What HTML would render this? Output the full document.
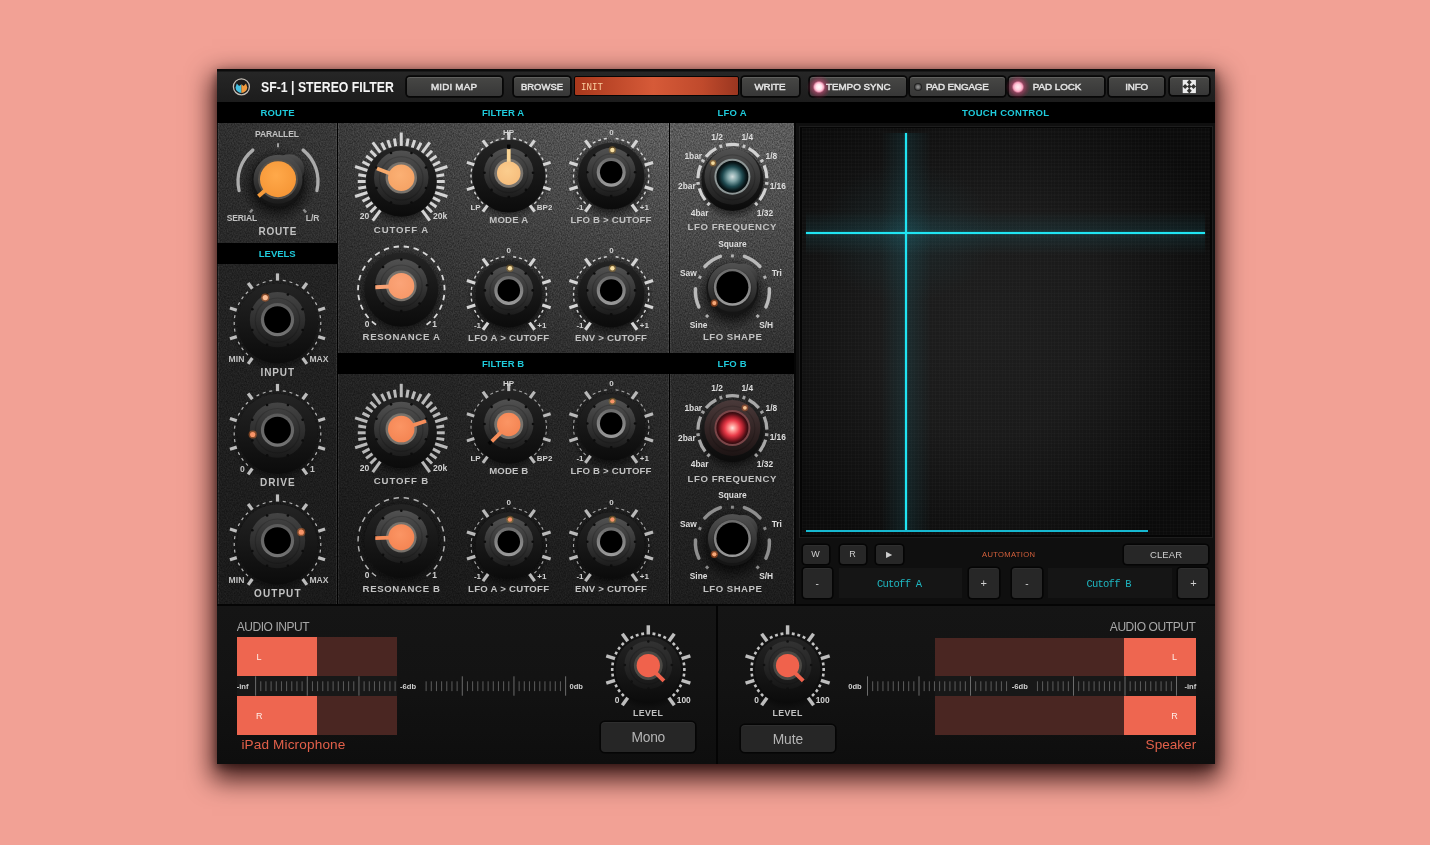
<!DOCTYPE html>
<html lang="en"><head><meta charset="utf-8"><title>SF-1 Stereo Filter</title>
<style>
*{box-sizing:border-box;margin:0;padding:0}
html,body{width:1430px;height:845px;overflow:hidden;background:#f2a195}
body{font-family:"Liberation Sans",sans-serif;font-weight:700}
#stage{position:absolute;left:0;top:0;width:1430px;height:845px;overflow:hidden;background:#f2a195}
#stage>*{position:absolute}
.t{white-space:nowrap;font-weight:700}
#frame{left:217.2px;top:69.2px;width:997.6px;height:695px;background:#0e0e0e;box-shadow:0 11px 24px 5px rgba(25,0,0,.8),0 3px 8px rgba(0,0,0,.45)}
#hdr{left:217px;top:69px;width:998px;height:33px;background:linear-gradient(#0c0c0c 0,#0c0c0c 2px,#262626 3px,#1c1c1c 100%)}
.band{background:#000}
.pn{background:#2c2c2c}
.btn{background:linear-gradient(#474745,#373737);border-radius:3px;box-shadow:inset 0 1px 0 rgba(255,255,255,.14),0 0 0 1.8px #070707}
.btn2{background:#272727;border-radius:3px;box-shadow:inset 0 1px 0 rgba(255,255,255,.04),0 0 0 1.6px #050505}
#knobs{left:0;top:0}
.lcd{font-family:"Liberation Mono",monospace}

</style></head>
<body>
<div id="stage">
<div id="frame"></div>
<div id="hdr"></div>
<div class="band" style="left:217px;top:101.7px;width:998.00px;height:21.50px;"></div>
<div class="band" style="left:217px;top:243px;width:120.50px;height:20.80px;"></div>
<div class="band" style="left:337.5px;top:353px;width:457.50px;height:21.20px;"></div>
<div class="pn" style="left:218px;top:123.2px;width:118.90px;height:119.80px;box-shadow:inset 1px 0 0 rgba(255,255,255,.07),inset -1px 0 0 rgba(255,255,255,.07);background:linear-gradient(to bottom,rgba(0,0,0,0),rgba(0,0,0,.17)),linear-gradient(to right,#2f2f2f,#383838)"></div>
<div class="pn" style="left:218px;top:263.8px;width:118.90px;height:340.20px;box-shadow:inset 1px 0 0 rgba(255,255,255,.07),inset -1px 0 0 rgba(255,255,255,.07);background:linear-gradient(to bottom,#232323,#1a1a1a)"></div>
<div class="pn" style="left:338.2px;top:123.2px;width:330.80px;height:229.80px;box-shadow:inset 1px 0 0 rgba(255,255,255,.07),inset -1px 0 0 rgba(255,255,255,.07);background:linear-gradient(to bottom right,rgba(0,0,0,0) 50%,rgba(0,0,0,.13) 100%),linear-gradient(to bottom,rgba(0,0,0,0),rgba(0,0,0,.40)),linear-gradient(to right,#3a3a3a,#5e5e5e)"></div>
<div class="pn" style="left:338.2px;top:374.2px;width:330.80px;height:229.80px;box-shadow:inset 1px 0 0 rgba(255,255,255,.07),inset -1px 0 0 rgba(255,255,255,.07);background:linear-gradient(to bottom,rgba(0,0,0,0),rgba(0,0,0,.33)),linear-gradient(to right,#222,#2b2b2b)"></div>
<div class="pn" style="left:670.2px;top:123.2px;width:124.10px;height:229.80px;box-shadow:inset 1px 0 0 rgba(255,255,255,.07),inset -1px 0 0 rgba(255,255,255,.07);background:linear-gradient(to bottom,#5b5b5b,#484848 50%,#303030)"></div>
<div class="pn" style="left:670.2px;top:374.2px;width:124.10px;height:229.80px;box-shadow:inset 1px 0 0 rgba(255,255,255,.07),inset -1px 0 0 rgba(255,255,255,.07);background:linear-gradient(to bottom,#2b2b2b,#1c1c1c)"></div>
<svg style="left:217px;top:123px;mix-blend-mode:overlay;opacity:.30" width="578" height="481"><filter id="nz" color-interpolation-filters="sRGB" x="0" y="0" width="100%" height="100%"><feTurbulence type="fractalNoise" baseFrequency="0.85 0.6" numOctaves="2" seed="7"/><feColorMatrix type="matrix" values="1.6 0 0 0 -0.3  1.6 0 0 0 -0.3  1.6 0 0 0 -0.3  0 0 0 0 1"/></filter><rect width="578" height="481" filter="url(#nz)"/></svg>
<div class="band" style="left:217px;top:243px;width:120.50px;height:20.80px;"></div>
<div class="band" style="left:337.5px;top:353px;width:457.50px;height:21.20px;"></div>
<div class="" style="left:336.9px;top:123.2px;width:1.30px;height:480.80px;background:#000"></div>
<div class="" style="left:669px;top:123.2px;width:1.20px;height:480.80px;background:#000"></div>
<div class="" style="left:794.3px;top:123.2px;width:1.70px;height:480.80px;background:#050505"></div>
<div class="" style="left:796px;top:123px;width:419.00px;height:481.00px;background:#0f0f0f"></div>
<div class="" style="left:800px;top:126.5px;width:411.50px;height:410.00px;background:#050505;box-shadow:0 0 0 1px #1d1d1d,-1px -1px 0 0 #2a2a2a"></div>
<div id="pad" class="" style="left:802px;top:128.2px;width:408.00px;height:406.80px;background:repeating-linear-gradient(0deg,rgba(255,255,255,.014) 0 1px,rgba(0,0,0,0) 1px 3.5px),repeating-linear-gradient(90deg,rgba(255,255,255,.014) 0 1px,rgba(0,0,0,0) 1px 3.5px),radial-gradient(ellipse 62% 62% at 46% 48%,#1e1e1e 0,#1a1a1a 45%,#0b0b0b 100%);"></div>
<div class="" style="left:806px;top:133px;width:399.00px;height:398.00px;background:radial-gradient(ellipse 90px 70px at 100px 100px,rgba(30,150,170,.10),rgba(30,150,170,0) 100%)"></div>
<div class="" style="left:881px;top:133px;width:50.00px;height:398.00px;background:linear-gradient(90deg,rgba(30,150,170,0),rgba(30,150,170,.14) 50%,rgba(30,150,170,0))"></div>
<div class="" style="left:806px;top:211px;width:399.00px;height:44.00px;background:linear-gradient(180deg,rgba(30,150,170,0),rgba(30,150,170,.15) 50%,rgba(30,150,170,0))"></div>
<div class="" style="left:904.6px;top:133px;width:2.40px;height:398.00px;background:#20e4f2;box-shadow:0 0 2px rgba(28,220,238,.45)"></div>
<div class="" style="left:806px;top:232px;width:399.00px;height:2.30px;background:#20e4f2;box-shadow:0 0 2px rgba(28,220,238,.45)"></div>
<div class="" style="left:805.5px;top:530px;width:342.20px;height:2.00px;background:#16b8d0"></div>
<div class="" style="left:217px;top:606px;width:998.00px;height:158.20px;background:linear-gradient(#151515,#131313 45%,#0e0e0e)"></div>
<div class="" style="left:716.2px;top:606px;width:1.60px;height:158.20px;background:#040404"></div>
<div class="" style="left:217px;top:604px;width:998.00px;height:2.00px;background:#050505"></div>
<div class="btn" style="left:406.5px;top:77px;width:95.50px;height:18.50px;"></div>
<div class="btn" style="left:514px;top:77px;width:56.00px;height:18.50px;"></div>
<div class="" style="left:573.8px;top:76.3px;width:164.90px;height:19.50px;background:linear-gradient(90deg,#a8381c 0,#d65a38 48%,#c04a2c 78%,#9a3620 100%);border:1.8px solid #050505;border-radius:2px"></div>
<div class="btn" style="left:742px;top:77px;width:56.50px;height:18.50px;"></div>
<div class="btn" style="left:810px;top:77px;width:95.70px;height:18.50px;"></div>
<div class="btn" style="left:910px;top:77px;width:94.60px;height:18.50px;"></div>
<div class="btn" style="left:1009px;top:77px;width:95.00px;height:18.50px;"></div>
<div class="btn" style="left:1109.2px;top:77px;width:55.10px;height:18.50px;"></div>
<div class="btn" style="left:1169.9px;top:77.4px;width:39.40px;height:18.10px;"></div>
<div class="" style="left:806.5px;top:74.6px;width:24.00px;height:24.00px;border-radius:50%;background:radial-gradient(circle,#fff 0,#ffe3ec 17%,#f7a8c2 27%,rgba(215,70,120,.5) 36%,rgba(190,40,90,.22) 55%,rgba(190,40,90,0) 72%)"></div>
<div class="" style="left:1006.1px;top:74.6px;width:24.00px;height:24.00px;border-radius:50%;background:radial-gradient(circle,#ffeef3 0,#ffd0de 17%,#f7a0bc 27%,rgba(215,70,120,.5) 36%,rgba(190,40,90,.22) 55%,rgba(190,40,90,0) 72%)"></div>
<div class="" style="left:914.3px;top:82.6px;width:8.00px;height:8.00px;border-radius:50%;background:radial-gradient(circle,#9a9a9a 0,#6a6a6a 35%,#222 62%,#141414 100%)"></div>
<div class="btn2" style="left:802.5px;top:544.7px;width:26.20px;height:19.10px;"></div>
<div class="btn2" style="left:839.5px;top:544.7px;width:26.20px;height:19.10px;"></div>
<div class="btn2" style="left:876.2px;top:544.7px;width:26.50px;height:19.10px;"></div>
<div class="btn2" style="left:1123.7px;top:544.7px;width:84.80px;height:19.10px;"></div>
<div class="btn2" style="left:802.5px;top:568.1px;width:29.50px;height:29.50px;"></div>
<div class="" style="left:838.6px;top:568.1px;width:123.90px;height:29.50px;background:#151515"></div>
<div class="btn2" style="left:968.8px;top:568.1px;width:30.10px;height:29.50px;"></div>
<div class="btn2" style="left:1012.1px;top:568.1px;width:29.50px;height:29.50px;"></div>
<div class="" style="left:1048.2px;top:568.1px;width:124.20px;height:29.50px;background:#151515"></div>
<div class="btn2" style="left:1178.4px;top:568.1px;width:30.10px;height:29.50px;"></div>
<div class="" style="left:236.7px;top:637.4px;width:160.50px;height:38.20px;background:#4a2622"></div>
<div class="" style="left:236.7px;top:637.4px;width:80.30px;height:38.20px;background:#ee6650"></div>
<div class="" style="left:236.7px;top:696.3px;width:160.50px;height:38.50px;background:#4a2622"></div>
<div class="" style="left:236.7px;top:696.3px;width:80.30px;height:38.50px;background:#ee6650"></div>
<div class="" style="left:236.7px;top:675.6px;width:160.50px;height:20.70px;background:#181818"></div>
<div class="btn2" style="left:601.2px;top:722px;width:93.80px;height:30.20px;border-radius:4px;background:#262626"></div>
<div class="" style="left:934.7px;top:637.5px;width:261.50px;height:38.10px;background:#4a2622"></div>
<div class="" style="left:1123.8px;top:637.5px;width:72.40px;height:38.10px;background:#ee6650"></div>
<div class="" style="left:934.7px;top:696.3px;width:261.50px;height:38.30px;background:#4a2622"></div>
<div class="" style="left:1123.8px;top:696.3px;width:72.40px;height:38.30px;background:#ee6650"></div>
<div class="" style="left:934.7px;top:675.6px;width:261.50px;height:20.70px;background:#181818"></div>
<div class="btn2" style="left:741px;top:725px;width:93.80px;height:27.20px;border-radius:4px;background:#262626"></div>
<svg id="knobs" width="1430" height="845" viewBox="0 0 1430 845">
<defs>
<radialGradient id="sh2"><stop offset="0" stop-color="#000" stop-opacity=".9"/><stop offset=".6" stop-color="#000" stop-opacity=".6"/><stop offset=".82" stop-color="#000" stop-opacity=".22"/><stop offset="1" stop-color="#000" stop-opacity="0"/></radialGradient>
<radialGradient id="sh"><stop offset="0" stop-color="#000" stop-opacity=".85"/><stop offset=".72" stop-color="#000" stop-opacity=".55"/><stop offset="1" stop-color="#000" stop-opacity="0"/></radialGradient>
<linearGradient id="baseg" x1="0" y1="0" x2="0" y2="1"><stop offset="0" stop-color="#242424"/><stop offset=".55" stop-color="#161616"/><stop offset="1" stop-color="#0b0b0b"/></linearGradient>
<linearGradient id="capg" x1="0" y1="0" x2="0" y2="1"><stop offset="0" stop-color="#515151"/><stop offset=".45" stop-color="#3a3a3a"/><stop offset="1" stop-color="#1c1c1c"/></linearGradient>
<linearGradient id="capd" x1="0" y1="0" x2="0" y2="1"><stop offset="0" stop-color="#323232"/><stop offset=".5" stop-color="#262626"/><stop offset="1" stop-color="#161616"/></linearGradient>
<linearGradient id="capr" x1="0" y1="0" x2="0" y2="1"><stop offset="0" stop-color="#4a3a3a"/><stop offset=".5" stop-color="#342626"/><stop offset="1" stop-color="#1d1414"/></linearGradient>
<linearGradient id="ringg" x1="0" y1="0" x2="0" y2="1"><stop offset="0" stop-color="#6a6a6a"/><stop offset="1" stop-color="#9a9a9a"/></linearGradient>
<linearGradient id="capl" x1="0" y1="0" x2="0" y2="1"><stop offset="0" stop-color="#444"/><stop offset=".5" stop-color="#303030"/><stop offset="1" stop-color="#1a1a1a"/></linearGradient>
<linearGradient id="ringd" x1="0" y1="0" x2="0" y2="1"><stop offset="0" stop-color="#5a5a5a"/><stop offset="1" stop-color="#747474"/></linearGradient>
<radialGradient id="mA" cx=".45" cy=".4" r=".65"><stop offset="0" stop-color="#fbcd8e"/><stop offset="1" stop-color="#f6bd7c"/></radialGradient>
<radialGradient id="cA" cx=".45" cy=".4" r=".65"><stop offset="0" stop-color="#fbb074"/><stop offset="1" stop-color="#f5a264"/></radialGradient>
<radialGradient id="rA" cx=".45" cy=".4" r=".65"><stop offset="0" stop-color="#fba478"/><stop offset="1" stop-color="#f69868"/></radialGradient>
<radialGradient id="B" cx=".45" cy=".4" r=".65"><stop offset="0" stop-color="#fb9564"/><stop offset="1" stop-color="#f48452"/></radialGradient>
<radialGradient id="o0" cx=".45" cy=".4" r=".65"><stop offset="0" stop-color="#fbd59a"/><stop offset="1" stop-color="#f3bd7c"/></radialGradient>
<radialGradient id="o1" cx=".45" cy=".4" r=".65"><stop offset="0" stop-color="#fbb074"/><stop offset="1" stop-color="#f39c5c"/></radialGradient>
<radialGradient id="o2" cx=".45" cy=".4" r=".65"><stop offset="0" stop-color="#fb9562"/><stop offset="1" stop-color="#f3804c"/></radialGradient>
<radialGradient id="o3" cx=".45" cy=".4" r=".65"><stop offset="0" stop-color="#ffa94a"/><stop offset="1" stop-color="#f59535"/></radialGradient>
<radialGradient id="teal"><stop offset="0" stop-color="#d3dede"/><stop offset=".3" stop-color="#7fa3a6"/><stop offset=".62" stop-color="#1f4a50"/><stop offset=".85" stop-color="#0a1a1d"/><stop offset="1" stop-color="#050a0b"/></radialGradient>
<radialGradient id="red"><stop offset="0" stop-color="#ffe4de"/><stop offset=".22" stop-color="#ff9490"/><stop offset=".48" stop-color="#ea3c4a"/><stop offset=".7" stop-color="#a01e2a"/><stop offset=".88" stop-color="#501016"/><stop offset="1" stop-color="#300a0e"/></radialGradient>
</defs>
<circle cx="241.4" cy="86.8" r="8" fill="#1c1c1c" stroke="#c4bdb5" stroke-width="1.3"/><path d="M241.4 84.2L239.1 86.0L236.8 83.39999999999999L235.5 87.39999999999999A6 6 0 0 0 241.4 92.89999999999999Z" fill="#45bfe0"/><path d="M241.4 84.2L243.70000000000002 86.0L246.0 83.39999999999999L247.3 87.39999999999999A6 6 0 0 1 241.4 92.89999999999999Z" fill="#f09a3e"/>
<rect x="1182.7" y="79.9" width="13.2" height="13.2" fill="#ececec"/><path d="M1189.3 79.8L1191.8 82.3L1189.3 84.8L1186.8 82.3Z" fill="#333331"/><path d="M1189.3 88.2L1191.8 90.7L1189.3 93.2L1186.8 90.7Z" fill="#333331"/><path d="M1185.1 84.0L1187.6 86.5L1185.1 89.0L1182.6 86.5Z" fill="#333331"/><path d="M1193.5 84.0L1196.0 86.5L1193.5 89.0L1191.0 86.5Z" fill="#333331"/><path d="M1189.3 84.3L1191.5 86.5L1189.3 88.7L1187.1 86.5Z" fill="#333331"/><path d="M1182.7 86.5H1195.8999999999999M1189.3 79.9V93.1" stroke="#333331" stroke-width=".7"/>
<circle cx="278.00" cy="185.20" r="38" fill="url(#sh2)"/><circle cx="278.00" cy="180.70" r="26" fill="#151515"/><path d="M239.11 190.54A40 40 0 0 1 252.83 150.11" fill="none" stroke="#ababab" stroke-width="3.3" stroke-linecap="round"/><path d="M303.17 150.11A40 40 0 0 1 316.89 190.54" fill="none" stroke="#ababab" stroke-width="3.3" stroke-linecap="round"/><line x1="278.00" y1="147.20" x2="278.00" y2="143.20" stroke="#a0a0a0" stroke-width="2" stroke-linecap="butt"/><line x1="252.57" y1="209.44" x2="249.90" y2="212.41" stroke="#8a8a8a" stroke-width="2.4" stroke-linecap="butt"/><line x1="303.43" y1="209.44" x2="306.10" y2="212.41" stroke="#8a8a8a" stroke-width="2.4" stroke-linecap="butt"/><circle cx="289.15" cy="169.16" r="15" fill="url(#capg)"/><circle cx="278.00" cy="179.20" r="24.5" fill="url(#capg)"/><circle cx="278.00" cy="179.80" r="19.0" fill="none" stroke="#000" stroke-opacity=".16" stroke-width="1.2"/><circle cx="278.00" cy="179.20" r="20" fill="#55504a"/><line x1="270.45" y1="185.76" x2="258.38" y2="196.26" stroke="#f59a3a" stroke-width="4" stroke-linecap="butt"/><circle cx="278.00" cy="179.20" r="18" fill="url(#o3)"/>
<circle cx="277.50" cy="326.40" r="47" fill="url(#sh)"/><circle cx="277.50" cy="323.40" r="40" fill="url(#baseg)"/><path d="M247.97 355.07A43.3 43.3 0 0 1 245.83 352.93" fill="none" stroke="#b4b4b4" stroke-width="1.2" stroke-linecap="butt"/><path d="M243.38 350.06A43.3 43.3 0 0 1 241.60 347.61" fill="none" stroke="#b4b4b4" stroke-width="1.2" stroke-linecap="butt"/><path d="M239.63 344.39A43.3 43.3 0 0 1 238.26 341.70" fill="none" stroke="#b4b4b4" stroke-width="1.2" stroke-linecap="butt"/><path d="M235.00 331.66A43.3 43.3 0 0 1 234.52 328.68" fill="none" stroke="#b4b4b4" stroke-width="1.2" stroke-linecap="butt"/><path d="M234.23 324.91A43.3 43.3 0 0 1 234.23 321.89" fill="none" stroke="#b4b4b4" stroke-width="1.2" stroke-linecap="butt"/><path d="M234.52 318.12A43.3 43.3 0 0 1 235.00 315.14" fill="none" stroke="#b4b4b4" stroke-width="1.2" stroke-linecap="butt"/><path d="M238.26 305.10A43.3 43.3 0 0 1 239.63 302.41" fill="none" stroke="#b4b4b4" stroke-width="1.2" stroke-linecap="butt"/><path d="M241.60 299.19A43.3 43.3 0 0 1 243.38 296.74" fill="none" stroke="#b4b4b4" stroke-width="1.2" stroke-linecap="butt"/><path d="M245.83 293.87A43.3 43.3 0 0 1 247.97 291.73" fill="none" stroke="#b4b4b4" stroke-width="1.2" stroke-linecap="butt"/><path d="M256.51 285.53A43.3 43.3 0 0 1 259.20 284.16" fill="none" stroke="#b4b4b4" stroke-width="1.2" stroke-linecap="butt"/><path d="M262.69 282.71A43.3 43.3 0 0 1 265.56 281.78" fill="none" stroke="#b4b4b4" stroke-width="1.2" stroke-linecap="butt"/><path d="M269.24 280.90A43.3 43.3 0 0 1 272.22 280.42" fill="none" stroke="#b4b4b4" stroke-width="1.2" stroke-linecap="butt"/><path d="M282.78 280.42A43.3 43.3 0 0 1 285.76 280.90" fill="none" stroke="#b4b4b4" stroke-width="1.2" stroke-linecap="butt"/><path d="M289.44 281.78A43.3 43.3 0 0 1 292.31 282.71" fill="none" stroke="#b4b4b4" stroke-width="1.2" stroke-linecap="butt"/><path d="M295.80 284.16A43.3 43.3 0 0 1 298.49 285.53" fill="none" stroke="#b4b4b4" stroke-width="1.2" stroke-linecap="butt"/><path d="M307.03 291.73A43.3 43.3 0 0 1 309.17 293.87" fill="none" stroke="#b4b4b4" stroke-width="1.2" stroke-linecap="butt"/><path d="M311.62 296.74A43.3 43.3 0 0 1 313.40 299.19" fill="none" stroke="#b4b4b4" stroke-width="1.2" stroke-linecap="butt"/><path d="M315.37 302.41A43.3 43.3 0 0 1 316.74 305.10" fill="none" stroke="#b4b4b4" stroke-width="1.2" stroke-linecap="butt"/><path d="M320.00 315.14A43.3 43.3 0 0 1 320.48 318.12" fill="none" stroke="#b4b4b4" stroke-width="1.2" stroke-linecap="butt"/><path d="M320.77 321.89A43.3 43.3 0 0 1 320.77 324.91" fill="none" stroke="#b4b4b4" stroke-width="1.2" stroke-linecap="butt"/><path d="M320.48 328.68A43.3 43.3 0 0 1 320.00 331.66" fill="none" stroke="#b4b4b4" stroke-width="1.2" stroke-linecap="butt"/><path d="M316.74 341.70A43.3 43.3 0 0 1 315.37 344.39" fill="none" stroke="#b4b4b4" stroke-width="1.2" stroke-linecap="butt"/><path d="M313.40 347.61A43.3 43.3 0 0 1 311.62 350.06" fill="none" stroke="#b4b4b4" stroke-width="1.2" stroke-linecap="butt"/><path d="M309.17 352.93A43.3 43.3 0 0 1 307.03 355.07" fill="none" stroke="#b4b4b4" stroke-width="1.2" stroke-linecap="butt"/><line x1="252.34" y1="358.03" x2="248.11" y2="363.85" stroke="#bcbcbc" stroke-width="3.2" stroke-linecap="butt"/><line x1="236.79" y1="336.63" x2="229.95" y2="338.85" stroke="#bcbcbc" stroke-width="3.2" stroke-linecap="butt"/><line x1="236.79" y1="310.17" x2="229.95" y2="307.95" stroke="#bcbcbc" stroke-width="3.2" stroke-linecap="butt"/><line x1="252.34" y1="288.77" x2="248.11" y2="282.95" stroke="#bcbcbc" stroke-width="3.2" stroke-linecap="butt"/><line x1="277.50" y1="280.60" x2="277.50" y2="273.40" stroke="#bcbcbc" stroke-width="3.2" stroke-linecap="butt"/><line x1="302.66" y1="288.77" x2="306.89" y2="282.95" stroke="#bcbcbc" stroke-width="3.2" stroke-linecap="butt"/><line x1="318.21" y1="310.17" x2="325.05" y2="307.95" stroke="#bcbcbc" stroke-width="3.2" stroke-linecap="butt"/><line x1="318.21" y1="336.63" x2="325.05" y2="338.85" stroke="#bcbcbc" stroke-width="3.2" stroke-linecap="butt"/><line x1="302.66" y1="358.03" x2="306.89" y2="363.85" stroke="#bcbcbc" stroke-width="3.2" stroke-linecap="butt"/><circle cx="277.50" cy="319.60" r="27.7" fill="url(#capl)"/><circle cx="287.91" cy="294.47" r="1.3" fill="#0c0c0c"/><circle cx="302.63" cy="309.19" r="1.3" fill="#0c0c0c"/><circle cx="302.63" cy="330.01" r="1.3" fill="#0c0c0c"/><circle cx="287.91" cy="344.73" r="1.3" fill="#0c0c0c"/><circle cx="267.09" cy="344.73" r="1.3" fill="#0c0c0c"/><circle cx="252.37" cy="330.01" r="1.3" fill="#0c0c0c"/><circle cx="252.37" cy="309.19" r="1.3" fill="#0c0c0c"/><circle cx="267.09" cy="294.47" r="1.3" fill="#0c0c0c"/><circle cx="277.50" cy="320.20" r="22.2" fill="none" stroke="#000" stroke-opacity=".16" stroke-width="1.2"/><circle cx="277.50" cy="319.60" r="16.6" fill="url(#ringd)"/><circle cx="277.50" cy="319.60" r="13.4" fill="#000"/><circle cx="265.28" cy="297.56" r="4.1" fill="#e07030" opacity=".5"/><circle cx="265.28" cy="297.56" r="2.6" fill="#fbbc94"/>
<circle cx="277.50" cy="436.90" r="47" fill="url(#sh)"/><circle cx="277.50" cy="433.90" r="40" fill="url(#baseg)"/><path d="M247.97 465.57A43.3 43.3 0 0 1 245.83 463.43" fill="none" stroke="#b4b4b4" stroke-width="1.2" stroke-linecap="butt"/><path d="M243.38 460.56A43.3 43.3 0 0 1 241.60 458.11" fill="none" stroke="#b4b4b4" stroke-width="1.2" stroke-linecap="butt"/><path d="M239.63 454.89A43.3 43.3 0 0 1 238.26 452.20" fill="none" stroke="#b4b4b4" stroke-width="1.2" stroke-linecap="butt"/><path d="M235.00 442.16A43.3 43.3 0 0 1 234.52 439.18" fill="none" stroke="#b4b4b4" stroke-width="1.2" stroke-linecap="butt"/><path d="M234.23 435.41A43.3 43.3 0 0 1 234.23 432.39" fill="none" stroke="#b4b4b4" stroke-width="1.2" stroke-linecap="butt"/><path d="M234.52 428.62A43.3 43.3 0 0 1 235.00 425.64" fill="none" stroke="#b4b4b4" stroke-width="1.2" stroke-linecap="butt"/><path d="M238.26 415.60A43.3 43.3 0 0 1 239.63 412.91" fill="none" stroke="#b4b4b4" stroke-width="1.2" stroke-linecap="butt"/><path d="M241.60 409.69A43.3 43.3 0 0 1 243.38 407.24" fill="none" stroke="#b4b4b4" stroke-width="1.2" stroke-linecap="butt"/><path d="M245.83 404.37A43.3 43.3 0 0 1 247.97 402.23" fill="none" stroke="#b4b4b4" stroke-width="1.2" stroke-linecap="butt"/><path d="M256.51 396.03A43.3 43.3 0 0 1 259.20 394.66" fill="none" stroke="#b4b4b4" stroke-width="1.2" stroke-linecap="butt"/><path d="M262.69 393.21A43.3 43.3 0 0 1 265.56 392.28" fill="none" stroke="#b4b4b4" stroke-width="1.2" stroke-linecap="butt"/><path d="M269.24 391.40A43.3 43.3 0 0 1 272.22 390.92" fill="none" stroke="#b4b4b4" stroke-width="1.2" stroke-linecap="butt"/><path d="M282.78 390.92A43.3 43.3 0 0 1 285.76 391.40" fill="none" stroke="#b4b4b4" stroke-width="1.2" stroke-linecap="butt"/><path d="M289.44 392.28A43.3 43.3 0 0 1 292.31 393.21" fill="none" stroke="#b4b4b4" stroke-width="1.2" stroke-linecap="butt"/><path d="M295.80 394.66A43.3 43.3 0 0 1 298.49 396.03" fill="none" stroke="#b4b4b4" stroke-width="1.2" stroke-linecap="butt"/><path d="M307.03 402.23A43.3 43.3 0 0 1 309.17 404.37" fill="none" stroke="#b4b4b4" stroke-width="1.2" stroke-linecap="butt"/><path d="M311.62 407.24A43.3 43.3 0 0 1 313.40 409.69" fill="none" stroke="#b4b4b4" stroke-width="1.2" stroke-linecap="butt"/><path d="M315.37 412.91A43.3 43.3 0 0 1 316.74 415.60" fill="none" stroke="#b4b4b4" stroke-width="1.2" stroke-linecap="butt"/><path d="M320.00 425.64A43.3 43.3 0 0 1 320.48 428.62" fill="none" stroke="#b4b4b4" stroke-width="1.2" stroke-linecap="butt"/><path d="M320.77 432.39A43.3 43.3 0 0 1 320.77 435.41" fill="none" stroke="#b4b4b4" stroke-width="1.2" stroke-linecap="butt"/><path d="M320.48 439.18A43.3 43.3 0 0 1 320.00 442.16" fill="none" stroke="#b4b4b4" stroke-width="1.2" stroke-linecap="butt"/><path d="M316.74 452.20A43.3 43.3 0 0 1 315.37 454.89" fill="none" stroke="#b4b4b4" stroke-width="1.2" stroke-linecap="butt"/><path d="M313.40 458.11A43.3 43.3 0 0 1 311.62 460.56" fill="none" stroke="#b4b4b4" stroke-width="1.2" stroke-linecap="butt"/><path d="M309.17 463.43A43.3 43.3 0 0 1 307.03 465.57" fill="none" stroke="#b4b4b4" stroke-width="1.2" stroke-linecap="butt"/><line x1="252.34" y1="468.53" x2="248.11" y2="474.35" stroke="#bcbcbc" stroke-width="3.2" stroke-linecap="butt"/><line x1="236.79" y1="447.13" x2="229.95" y2="449.35" stroke="#bcbcbc" stroke-width="3.2" stroke-linecap="butt"/><line x1="236.79" y1="420.67" x2="229.95" y2="418.45" stroke="#bcbcbc" stroke-width="3.2" stroke-linecap="butt"/><line x1="252.34" y1="399.27" x2="248.11" y2="393.45" stroke="#bcbcbc" stroke-width="3.2" stroke-linecap="butt"/><line x1="277.50" y1="391.10" x2="277.50" y2="383.90" stroke="#bcbcbc" stroke-width="3.2" stroke-linecap="butt"/><line x1="302.66" y1="399.27" x2="306.89" y2="393.45" stroke="#bcbcbc" stroke-width="3.2" stroke-linecap="butt"/><line x1="318.21" y1="420.67" x2="325.05" y2="418.45" stroke="#bcbcbc" stroke-width="3.2" stroke-linecap="butt"/><line x1="318.21" y1="447.13" x2="325.05" y2="449.35" stroke="#bcbcbc" stroke-width="3.2" stroke-linecap="butt"/><line x1="302.66" y1="468.53" x2="306.89" y2="474.35" stroke="#bcbcbc" stroke-width="3.2" stroke-linecap="butt"/><circle cx="277.50" cy="430.10" r="27.7" fill="url(#capl)"/><circle cx="287.91" cy="404.97" r="1.3" fill="#0c0c0c"/><circle cx="302.63" cy="419.69" r="1.3" fill="#0c0c0c"/><circle cx="302.63" cy="440.51" r="1.3" fill="#0c0c0c"/><circle cx="287.91" cy="455.23" r="1.3" fill="#0c0c0c"/><circle cx="267.09" cy="455.23" r="1.3" fill="#0c0c0c"/><circle cx="252.37" cy="440.51" r="1.3" fill="#0c0c0c"/><circle cx="252.37" cy="419.69" r="1.3" fill="#0c0c0c"/><circle cx="267.09" cy="404.97" r="1.3" fill="#0c0c0c"/><circle cx="277.50" cy="430.70" r="22.2" fill="none" stroke="#000" stroke-opacity=".16" stroke-width="1.2"/><circle cx="277.50" cy="430.10" r="16.6" fill="url(#ringd)"/><circle cx="277.50" cy="430.10" r="13.4" fill="#000"/><circle cx="252.68" cy="434.48" r="4.1" fill="#e07030" opacity=".5"/><circle cx="252.68" cy="434.48" r="2.6" fill="#f79468"/>
<circle cx="277.50" cy="547.40" r="47" fill="url(#sh)"/><circle cx="277.50" cy="544.40" r="40" fill="url(#baseg)"/><path d="M247.97 576.07A43.3 43.3 0 0 1 245.83 573.93" fill="none" stroke="#b4b4b4" stroke-width="1.2" stroke-linecap="butt"/><path d="M243.38 571.06A43.3 43.3 0 0 1 241.60 568.61" fill="none" stroke="#b4b4b4" stroke-width="1.2" stroke-linecap="butt"/><path d="M239.63 565.39A43.3 43.3 0 0 1 238.26 562.70" fill="none" stroke="#b4b4b4" stroke-width="1.2" stroke-linecap="butt"/><path d="M235.00 552.66A43.3 43.3 0 0 1 234.52 549.68" fill="none" stroke="#b4b4b4" stroke-width="1.2" stroke-linecap="butt"/><path d="M234.23 545.91A43.3 43.3 0 0 1 234.23 542.89" fill="none" stroke="#b4b4b4" stroke-width="1.2" stroke-linecap="butt"/><path d="M234.52 539.12A43.3 43.3 0 0 1 235.00 536.14" fill="none" stroke="#b4b4b4" stroke-width="1.2" stroke-linecap="butt"/><path d="M238.26 526.10A43.3 43.3 0 0 1 239.63 523.41" fill="none" stroke="#b4b4b4" stroke-width="1.2" stroke-linecap="butt"/><path d="M241.60 520.19A43.3 43.3 0 0 1 243.38 517.74" fill="none" stroke="#b4b4b4" stroke-width="1.2" stroke-linecap="butt"/><path d="M245.83 514.87A43.3 43.3 0 0 1 247.97 512.73" fill="none" stroke="#b4b4b4" stroke-width="1.2" stroke-linecap="butt"/><path d="M256.51 506.53A43.3 43.3 0 0 1 259.20 505.16" fill="none" stroke="#b4b4b4" stroke-width="1.2" stroke-linecap="butt"/><path d="M262.69 503.71A43.3 43.3 0 0 1 265.56 502.78" fill="none" stroke="#b4b4b4" stroke-width="1.2" stroke-linecap="butt"/><path d="M269.24 501.90A43.3 43.3 0 0 1 272.22 501.42" fill="none" stroke="#b4b4b4" stroke-width="1.2" stroke-linecap="butt"/><path d="M282.78 501.42A43.3 43.3 0 0 1 285.76 501.90" fill="none" stroke="#b4b4b4" stroke-width="1.2" stroke-linecap="butt"/><path d="M289.44 502.78A43.3 43.3 0 0 1 292.31 503.71" fill="none" stroke="#b4b4b4" stroke-width="1.2" stroke-linecap="butt"/><path d="M295.80 505.16A43.3 43.3 0 0 1 298.49 506.53" fill="none" stroke="#b4b4b4" stroke-width="1.2" stroke-linecap="butt"/><path d="M307.03 512.73A43.3 43.3 0 0 1 309.17 514.87" fill="none" stroke="#b4b4b4" stroke-width="1.2" stroke-linecap="butt"/><path d="M311.62 517.74A43.3 43.3 0 0 1 313.40 520.19" fill="none" stroke="#b4b4b4" stroke-width="1.2" stroke-linecap="butt"/><path d="M315.37 523.41A43.3 43.3 0 0 1 316.74 526.10" fill="none" stroke="#b4b4b4" stroke-width="1.2" stroke-linecap="butt"/><path d="M320.00 536.14A43.3 43.3 0 0 1 320.48 539.12" fill="none" stroke="#b4b4b4" stroke-width="1.2" stroke-linecap="butt"/><path d="M320.77 542.89A43.3 43.3 0 0 1 320.77 545.91" fill="none" stroke="#b4b4b4" stroke-width="1.2" stroke-linecap="butt"/><path d="M320.48 549.68A43.3 43.3 0 0 1 320.00 552.66" fill="none" stroke="#b4b4b4" stroke-width="1.2" stroke-linecap="butt"/><path d="M316.74 562.70A43.3 43.3 0 0 1 315.37 565.39" fill="none" stroke="#b4b4b4" stroke-width="1.2" stroke-linecap="butt"/><path d="M313.40 568.61A43.3 43.3 0 0 1 311.62 571.06" fill="none" stroke="#b4b4b4" stroke-width="1.2" stroke-linecap="butt"/><path d="M309.17 573.93A43.3 43.3 0 0 1 307.03 576.07" fill="none" stroke="#b4b4b4" stroke-width="1.2" stroke-linecap="butt"/><line x1="252.34" y1="579.03" x2="248.11" y2="584.85" stroke="#bcbcbc" stroke-width="3.2" stroke-linecap="butt"/><line x1="236.79" y1="557.63" x2="229.95" y2="559.85" stroke="#bcbcbc" stroke-width="3.2" stroke-linecap="butt"/><line x1="236.79" y1="531.17" x2="229.95" y2="528.95" stroke="#bcbcbc" stroke-width="3.2" stroke-linecap="butt"/><line x1="252.34" y1="509.77" x2="248.11" y2="503.95" stroke="#bcbcbc" stroke-width="3.2" stroke-linecap="butt"/><line x1="277.50" y1="501.60" x2="277.50" y2="494.40" stroke="#bcbcbc" stroke-width="3.2" stroke-linecap="butt"/><line x1="302.66" y1="509.77" x2="306.89" y2="503.95" stroke="#bcbcbc" stroke-width="3.2" stroke-linecap="butt"/><line x1="318.21" y1="531.17" x2="325.05" y2="528.95" stroke="#bcbcbc" stroke-width="3.2" stroke-linecap="butt"/><line x1="318.21" y1="557.63" x2="325.05" y2="559.85" stroke="#bcbcbc" stroke-width="3.2" stroke-linecap="butt"/><line x1="302.66" y1="579.03" x2="306.89" y2="584.85" stroke="#bcbcbc" stroke-width="3.2" stroke-linecap="butt"/><circle cx="277.50" cy="540.60" r="27.7" fill="url(#capl)"/><circle cx="287.91" cy="515.47" r="1.3" fill="#0c0c0c"/><circle cx="302.63" cy="530.19" r="1.3" fill="#0c0c0c"/><circle cx="302.63" cy="551.01" r="1.3" fill="#0c0c0c"/><circle cx="287.91" cy="565.73" r="1.3" fill="#0c0c0c"/><circle cx="267.09" cy="565.73" r="1.3" fill="#0c0c0c"/><circle cx="252.37" cy="551.01" r="1.3" fill="#0c0c0c"/><circle cx="252.37" cy="530.19" r="1.3" fill="#0c0c0c"/><circle cx="267.09" cy="515.47" r="1.3" fill="#0c0c0c"/><circle cx="277.50" cy="541.20" r="22.2" fill="none" stroke="#000" stroke-opacity=".16" stroke-width="1.2"/><circle cx="277.50" cy="540.60" r="16.6" fill="url(#ringd)"/><circle cx="277.50" cy="540.60" r="13.4" fill="#000"/><circle cx="301.25" cy="532.19" r="4.1" fill="#e07030" opacity=".5"/><circle cx="301.25" cy="532.19" r="2.6" fill="#f79468"/>
<circle cx="401.25" cy="184.50" r="41.3" fill="url(#sh)"/><circle cx="401.25" cy="181.50" r="35.3" fill="url(#baseg)"/><line x1="380.32" y1="210.30" x2="372.74" y2="220.74" stroke="#d4d4d4" stroke-width="3.0" stroke-linecap="butt"/><line x1="376.08" y1="206.67" x2="370.49" y2="212.26" stroke="#d4d4d4" stroke-width="3.0" stroke-linecap="butt"/><line x1="372.45" y1="202.43" x2="366.06" y2="207.07" stroke="#d4d4d4" stroke-width="3.0" stroke-linecap="butt"/><line x1="369.53" y1="197.66" x2="362.49" y2="201.25" stroke="#d4d4d4" stroke-width="3.0" stroke-linecap="butt"/><line x1="367.39" y1="192.50" x2="355.12" y2="196.49" stroke="#d4d4d4" stroke-width="3.0" stroke-linecap="butt"/><line x1="366.09" y1="187.07" x2="358.29" y2="188.30" stroke="#d4d4d4" stroke-width="3.0" stroke-linecap="butt"/><line x1="365.65" y1="181.50" x2="357.75" y2="181.50" stroke="#d4d4d4" stroke-width="3.0" stroke-linecap="butt"/><line x1="366.09" y1="175.93" x2="358.29" y2="174.70" stroke="#d4d4d4" stroke-width="3.0" stroke-linecap="butt"/><line x1="367.39" y1="170.50" x2="355.12" y2="166.51" stroke="#d4d4d4" stroke-width="3.0" stroke-linecap="butt"/><line x1="369.53" y1="165.34" x2="362.49" y2="161.75" stroke="#d4d4d4" stroke-width="3.0" stroke-linecap="butt"/><line x1="372.45" y1="160.57" x2="366.06" y2="155.93" stroke="#d4d4d4" stroke-width="3.0" stroke-linecap="butt"/><line x1="376.08" y1="156.33" x2="370.49" y2="150.74" stroke="#d4d4d4" stroke-width="3.0" stroke-linecap="butt"/><line x1="380.32" y1="152.70" x2="372.74" y2="142.26" stroke="#d4d4d4" stroke-width="3.0" stroke-linecap="butt"/><line x1="385.09" y1="149.78" x2="381.50" y2="142.74" stroke="#d4d4d4" stroke-width="3.0" stroke-linecap="butt"/><line x1="390.25" y1="147.64" x2="387.81" y2="140.13" stroke="#d4d4d4" stroke-width="3.0" stroke-linecap="butt"/><line x1="395.68" y1="146.34" x2="394.45" y2="138.54" stroke="#d4d4d4" stroke-width="3.0" stroke-linecap="butt"/><line x1="401.25" y1="145.90" x2="401.25" y2="132.50" stroke="#d4d4d4" stroke-width="3.0" stroke-linecap="butt"/><line x1="406.82" y1="146.34" x2="408.05" y2="138.54" stroke="#d4d4d4" stroke-width="3.0" stroke-linecap="butt"/><line x1="412.25" y1="147.64" x2="414.69" y2="140.13" stroke="#d4d4d4" stroke-width="3.0" stroke-linecap="butt"/><line x1="417.41" y1="149.78" x2="421.00" y2="142.74" stroke="#d4d4d4" stroke-width="3.0" stroke-linecap="butt"/><line x1="422.18" y1="152.70" x2="429.76" y2="142.26" stroke="#d4d4d4" stroke-width="3.0" stroke-linecap="butt"/><line x1="426.42" y1="156.33" x2="432.01" y2="150.74" stroke="#d4d4d4" stroke-width="3.0" stroke-linecap="butt"/><line x1="430.05" y1="160.57" x2="436.44" y2="155.93" stroke="#d4d4d4" stroke-width="3.0" stroke-linecap="butt"/><line x1="432.97" y1="165.34" x2="440.01" y2="161.75" stroke="#d4d4d4" stroke-width="3.0" stroke-linecap="butt"/><line x1="435.11" y1="170.50" x2="447.38" y2="166.51" stroke="#d4d4d4" stroke-width="3.0" stroke-linecap="butt"/><line x1="436.41" y1="175.93" x2="444.21" y2="174.70" stroke="#d4d4d4" stroke-width="3.0" stroke-linecap="butt"/><line x1="436.85" y1="181.50" x2="444.75" y2="181.50" stroke="#d4d4d4" stroke-width="3.0" stroke-linecap="butt"/><line x1="436.41" y1="187.07" x2="444.21" y2="188.30" stroke="#d4d4d4" stroke-width="3.0" stroke-linecap="butt"/><line x1="435.11" y1="192.50" x2="447.38" y2="196.49" stroke="#d4d4d4" stroke-width="3.0" stroke-linecap="butt"/><line x1="432.97" y1="197.66" x2="440.01" y2="201.25" stroke="#d4d4d4" stroke-width="3.0" stroke-linecap="butt"/><line x1="430.05" y1="202.43" x2="436.44" y2="207.07" stroke="#d4d4d4" stroke-width="3.0" stroke-linecap="butt"/><line x1="426.42" y1="206.67" x2="432.01" y2="212.26" stroke="#d4d4d4" stroke-width="3.0" stroke-linecap="butt"/><line x1="422.18" y1="210.30" x2="429.76" y2="220.74" stroke="#d4d4d4" stroke-width="3.0" stroke-linecap="butt"/><circle cx="401.25" cy="177.75" r="27.25" fill="url(#capg)"/><circle cx="411.49" cy="153.04" r="1.3" fill="#0c0c0c"/><circle cx="425.96" cy="167.51" r="1.3" fill="#0c0c0c"/><circle cx="425.96" cy="187.99" r="1.3" fill="#0c0c0c"/><circle cx="411.49" cy="202.46" r="1.3" fill="#0c0c0c"/><circle cx="391.01" cy="202.46" r="1.3" fill="#0c0c0c"/><circle cx="376.54" cy="187.99" r="1.3" fill="#0c0c0c"/><circle cx="376.54" cy="167.51" r="1.3" fill="#0c0c0c"/><circle cx="391.01" cy="153.04" r="1.3" fill="#0c0c0c"/><circle cx="401.25" cy="178.35" r="21.75" fill="none" stroke="#000" stroke-opacity=".16" stroke-width="1.2"/><circle cx="401.25" cy="177.75" r="15.75" fill="#77726c"/><line x1="390.75" y1="173.72" x2="376.98" y2="168.43" stroke="#f8aa6c" stroke-width="3.8" stroke-linecap="butt"/><circle cx="401.25" cy="177.75" r="13.25" fill="url(#cA)"/>
<circle cx="508.75" cy="179.00" r="41.5" fill="url(#sh)"/><circle cx="508.75" cy="176.00" r="36.5" fill="url(#baseg)"/><path d="M483.15 203.74A37.75 37.75 0 0 1 481.01 201.60" fill="none" stroke="#d4d4d4" stroke-width="1.4" stroke-linecap="butt"/><path d="M479.12 199.40A37.75 37.75 0 0 1 477.34 196.95" fill="none" stroke="#d4d4d4" stroke-width="1.4" stroke-linecap="butt"/><path d="M475.83 194.47A37.75 37.75 0 0 1 474.45 191.77" fill="none" stroke="#d4d4d4" stroke-width="1.4" stroke-linecap="butt"/><path d="M471.73 183.40A37.75 37.75 0 0 1 471.26 180.40" fill="none" stroke="#d4d4d4" stroke-width="1.4" stroke-linecap="butt"/><path d="M471.03 177.51A37.75 37.75 0 0 1 471.03 174.49" fill="none" stroke="#d4d4d4" stroke-width="1.4" stroke-linecap="butt"/><path d="M471.26 171.60A37.75 37.75 0 0 1 471.73 168.60" fill="none" stroke="#d4d4d4" stroke-width="1.4" stroke-linecap="butt"/><path d="M474.45 160.23A37.75 37.75 0 0 1 475.83 157.53" fill="none" stroke="#d4d4d4" stroke-width="1.4" stroke-linecap="butt"/><path d="M477.34 155.05A37.75 37.75 0 0 1 479.12 152.60" fill="none" stroke="#d4d4d4" stroke-width="1.4" stroke-linecap="butt"/><path d="M481.01 150.40A37.75 37.75 0 0 1 483.15 148.26" fill="none" stroke="#d4d4d4" stroke-width="1.4" stroke-linecap="butt"/><path d="M490.28 143.08A37.75 37.75 0 0 1 492.98 141.70" fill="none" stroke="#d4d4d4" stroke-width="1.4" stroke-linecap="butt"/><path d="M495.65 140.59A37.75 37.75 0 0 1 498.53 139.66" fill="none" stroke="#d4d4d4" stroke-width="1.4" stroke-linecap="butt"/><path d="M501.35 138.98A37.75 37.75 0 0 1 504.35 138.51" fill="none" stroke="#d4d4d4" stroke-width="1.4" stroke-linecap="butt"/><path d="M513.15 138.51A37.75 37.75 0 0 1 516.15 138.98" fill="none" stroke="#d4d4d4" stroke-width="1.4" stroke-linecap="butt"/><path d="M518.97 139.66A37.75 37.75 0 0 1 521.85 140.59" fill="none" stroke="#d4d4d4" stroke-width="1.4" stroke-linecap="butt"/><path d="M524.52 141.70A37.75 37.75 0 0 1 527.22 143.08" fill="none" stroke="#d4d4d4" stroke-width="1.4" stroke-linecap="butt"/><path d="M534.35 148.26A37.75 37.75 0 0 1 536.49 150.40" fill="none" stroke="#d4d4d4" stroke-width="1.4" stroke-linecap="butt"/><path d="M538.38 152.60A37.75 37.75 0 0 1 540.16 155.05" fill="none" stroke="#d4d4d4" stroke-width="1.4" stroke-linecap="butt"/><path d="M541.67 157.53A37.75 37.75 0 0 1 543.05 160.23" fill="none" stroke="#d4d4d4" stroke-width="1.4" stroke-linecap="butt"/><path d="M545.77 168.60A37.75 37.75 0 0 1 546.24 171.60" fill="none" stroke="#d4d4d4" stroke-width="1.4" stroke-linecap="butt"/><path d="M546.47 174.49A37.75 37.75 0 0 1 546.47 177.51" fill="none" stroke="#d4d4d4" stroke-width="1.4" stroke-linecap="butt"/><path d="M546.24 180.40A37.75 37.75 0 0 1 545.77 183.40" fill="none" stroke="#d4d4d4" stroke-width="1.4" stroke-linecap="butt"/><path d="M543.05 191.77A37.75 37.75 0 0 1 541.67 194.47" fill="none" stroke="#d4d4d4" stroke-width="1.4" stroke-linecap="butt"/><path d="M540.16 196.95A37.75 37.75 0 0 1 538.38 199.40" fill="none" stroke="#d4d4d4" stroke-width="1.4" stroke-linecap="butt"/><path d="M536.49 201.60A37.75 37.75 0 0 1 534.35 203.74" fill="none" stroke="#d4d4d4" stroke-width="1.4" stroke-linecap="butt"/><line x1="487.47" y1="205.29" x2="482.89" y2="211.60" stroke="#d4d4d4" stroke-width="3.1" stroke-linecap="butt"/><line x1="474.32" y1="187.19" x2="466.90" y2="189.60" stroke="#d4d4d4" stroke-width="3.1" stroke-linecap="butt"/><line x1="474.32" y1="164.81" x2="466.90" y2="162.40" stroke="#d4d4d4" stroke-width="3.1" stroke-linecap="butt"/><line x1="487.47" y1="146.71" x2="482.89" y2="140.40" stroke="#d4d4d4" stroke-width="3.1" stroke-linecap="butt"/><line x1="508.75" y1="139.80" x2="508.75" y2="132.00" stroke="#d4d4d4" stroke-width="3.1" stroke-linecap="butt"/><line x1="530.03" y1="146.71" x2="534.61" y2="140.40" stroke="#d4d4d4" stroke-width="3.1" stroke-linecap="butt"/><line x1="543.18" y1="164.81" x2="550.60" y2="162.40" stroke="#d4d4d4" stroke-width="3.1" stroke-linecap="butt"/><line x1="543.18" y1="187.19" x2="550.60" y2="189.60" stroke="#d4d4d4" stroke-width="3.1" stroke-linecap="butt"/><line x1="530.03" y1="205.29" x2="534.61" y2="211.60" stroke="#d4d4d4" stroke-width="3.1" stroke-linecap="butt"/><line x1="508.75" y1="148.75" x2="508.75" y2="144.55" stroke="#050505" stroke-width="3.4" stroke-linecap="butt"/><circle cx="508.75" cy="172.75" r="24.75" fill="url(#capg)"/><circle cx="525.90" cy="155.60" r="1.3" fill="#0c0c0c"/><circle cx="533.00" cy="172.75" r="1.3" fill="#0c0c0c"/><circle cx="525.90" cy="189.90" r="1.3" fill="#0c0c0c"/><circle cx="508.75" cy="197.00" r="1.3" fill="#0c0c0c"/><circle cx="491.60" cy="189.90" r="1.3" fill="#0c0c0c"/><circle cx="484.50" cy="172.75" r="1.3" fill="#0c0c0c"/><circle cx="491.60" cy="155.60" r="1.3" fill="#0c0c0c"/><circle cx="508.75" cy="148.50" r="1.3" fill="#0c0c0c"/><circle cx="508.75" cy="173.35" r="19.25" fill="none" stroke="#000" stroke-opacity=".16" stroke-width="1.2"/><circle cx="508.75" cy="173.15" r="14.5" fill="#77726c"/><line x1="508.75" y1="163.40" x2="508.75" y2="149.15" stroke="#f9d494" stroke-width="3.8" stroke-linecap="butt"/><circle cx="508.75" cy="173.15" r="11.75" fill="url(#mA)"/>
<circle cx="611.20" cy="179.00" r="42.2" fill="url(#sh)"/><circle cx="611.20" cy="176.00" r="33.2" fill="url(#baseg)"/><path d="M585.63 203.71A37.7 37.7 0 0 1 583.49 201.57" fill="none" stroke="#d4d4d4" stroke-width="1.4" stroke-linecap="butt"/><path d="M581.61 199.37A37.7 37.7 0 0 1 579.84 196.92" fill="none" stroke="#d4d4d4" stroke-width="1.4" stroke-linecap="butt"/><path d="M578.32 194.45A37.7 37.7 0 0 1 576.95 191.75" fill="none" stroke="#d4d4d4" stroke-width="1.4" stroke-linecap="butt"/><path d="M574.23 183.39A37.7 37.7 0 0 1 573.76 180.40" fill="none" stroke="#d4d4d4" stroke-width="1.4" stroke-linecap="butt"/><path d="M573.53 177.51A37.7 37.7 0 0 1 573.53 174.49" fill="none" stroke="#d4d4d4" stroke-width="1.4" stroke-linecap="butt"/><path d="M573.76 171.60A37.7 37.7 0 0 1 574.23 168.61" fill="none" stroke="#d4d4d4" stroke-width="1.4" stroke-linecap="butt"/><path d="M576.95 160.25A37.7 37.7 0 0 1 578.32 157.55" fill="none" stroke="#d4d4d4" stroke-width="1.4" stroke-linecap="butt"/><path d="M579.84 155.08A37.7 37.7 0 0 1 581.61 152.63" fill="none" stroke="#d4d4d4" stroke-width="1.4" stroke-linecap="butt"/><path d="M583.49 150.43A37.7 37.7 0 0 1 585.63 148.29" fill="none" stroke="#d4d4d4" stroke-width="1.4" stroke-linecap="butt"/><path d="M592.75 143.12A37.7 37.7 0 0 1 595.45 141.75" fill="none" stroke="#d4d4d4" stroke-width="1.4" stroke-linecap="butt"/><path d="M598.12 140.64A37.7 37.7 0 0 1 601.00 139.71" fill="none" stroke="#d4d4d4" stroke-width="1.4" stroke-linecap="butt"/><path d="M603.81 139.03A37.7 37.7 0 0 1 606.80 138.56" fill="none" stroke="#d4d4d4" stroke-width="1.4" stroke-linecap="butt"/><path d="M615.60 138.56A37.7 37.7 0 0 1 618.59 139.03" fill="none" stroke="#d4d4d4" stroke-width="1.4" stroke-linecap="butt"/><path d="M621.40 139.71A37.7 37.7 0 0 1 624.28 140.64" fill="none" stroke="#d4d4d4" stroke-width="1.4" stroke-linecap="butt"/><path d="M626.95 141.75A37.7 37.7 0 0 1 629.65 143.12" fill="none" stroke="#d4d4d4" stroke-width="1.4" stroke-linecap="butt"/><path d="M636.77 148.29A37.7 37.7 0 0 1 638.91 150.43" fill="none" stroke="#d4d4d4" stroke-width="1.4" stroke-linecap="butt"/><path d="M640.79 152.63A37.7 37.7 0 0 1 642.56 155.08" fill="none" stroke="#d4d4d4" stroke-width="1.4" stroke-linecap="butt"/><path d="M644.08 157.55A37.7 37.7 0 0 1 645.45 160.25" fill="none" stroke="#d4d4d4" stroke-width="1.4" stroke-linecap="butt"/><path d="M648.17 168.61A37.7 37.7 0 0 1 648.64 171.60" fill="none" stroke="#d4d4d4" stroke-width="1.4" stroke-linecap="butt"/><path d="M648.87 174.49A37.7 37.7 0 0 1 648.87 177.51" fill="none" stroke="#d4d4d4" stroke-width="1.4" stroke-linecap="butt"/><path d="M648.64 180.40A37.7 37.7 0 0 1 648.17 183.39" fill="none" stroke="#d4d4d4" stroke-width="1.4" stroke-linecap="butt"/><path d="M645.45 191.75A37.7 37.7 0 0 1 644.08 194.45" fill="none" stroke="#d4d4d4" stroke-width="1.4" stroke-linecap="butt"/><path d="M642.56 196.92A37.7 37.7 0 0 1 640.79 199.37" fill="none" stroke="#d4d4d4" stroke-width="1.4" stroke-linecap="butt"/><path d="M638.91 201.57A37.7 37.7 0 0 1 636.77 203.71" fill="none" stroke="#d4d4d4" stroke-width="1.4" stroke-linecap="butt"/><line x1="590.51" y1="204.48" x2="585.34" y2="211.60" stroke="#d4d4d4" stroke-width="3.2" stroke-linecap="butt"/><line x1="577.72" y1="186.88" x2="569.35" y2="189.60" stroke="#d4d4d4" stroke-width="3.2" stroke-linecap="butt"/><line x1="577.72" y1="165.12" x2="569.35" y2="162.40" stroke="#d4d4d4" stroke-width="3.2" stroke-linecap="butt"/><line x1="590.51" y1="147.52" x2="585.34" y2="140.40" stroke="#d4d4d4" stroke-width="3.2" stroke-linecap="butt"/><line x1="631.89" y1="147.52" x2="637.06" y2="140.40" stroke="#d4d4d4" stroke-width="3.2" stroke-linecap="butt"/><line x1="644.68" y1="165.12" x2="653.05" y2="162.40" stroke="#d4d4d4" stroke-width="3.2" stroke-linecap="butt"/><line x1="644.68" y1="186.88" x2="653.05" y2="189.60" stroke="#d4d4d4" stroke-width="3.2" stroke-linecap="butt"/><line x1="631.89" y1="204.48" x2="637.06" y2="211.60" stroke="#d4d4d4" stroke-width="3.2" stroke-linecap="butt"/><circle cx="611.20" cy="172.20" r="24.4" fill="url(#capg)"/><circle cx="611.20" cy="148.30" r="1.3" fill="#0c0c0c"/><circle cx="628.10" cy="155.30" r="1.3" fill="#0c0c0c"/><circle cx="635.10" cy="172.20" r="1.3" fill="#0c0c0c"/><circle cx="628.10" cy="189.10" r="1.3" fill="#0c0c0c"/><circle cx="611.20" cy="196.10" r="1.3" fill="#0c0c0c"/><circle cx="594.30" cy="189.10" r="1.3" fill="#0c0c0c"/><circle cx="587.30" cy="172.20" r="1.3" fill="#0c0c0c"/><circle cx="594.30" cy="155.30" r="1.3" fill="#0c0c0c"/><circle cx="611.20" cy="172.80" r="18.9" fill="none" stroke="#000" stroke-opacity=".16" stroke-width="1.2"/><circle cx="611.20" cy="172.20" r="14.5" fill="url(#ringg)"/><circle cx="611.20" cy="172.20" r="11.25" fill="#000"/><circle cx="612.36" cy="150.03" r="3.7" fill="#a07830" opacity=".5"/><circle cx="612.36" cy="150.03" r="2.2" fill="#f8dfa2"/>
<circle cx="401.30" cy="292.70" r="44" fill="url(#sh)"/><circle cx="401.30" cy="289.70" r="37" fill="url(#baseg)"/><path d="M393.57 247.15A43.25 43.25 0 0 1 398.96 246.51" fill="none" stroke="#d9d9d9" stroke-width="1.8" stroke-linecap="butt"/><path d="M403.64 246.51A43.25 43.25 0 0 1 409.03 247.15" fill="none" stroke="#d9d9d9" stroke-width="1.8" stroke-linecap="butt"/><path d="M383.92 250.10A43.25 43.25 0 0 1 389.02 248.23" fill="none" stroke="#d9d9d9" stroke-width="1.8" stroke-linecap="butt"/><path d="M413.58 248.23A43.25 43.25 0 0 1 418.68 250.10" fill="none" stroke="#d9d9d9" stroke-width="1.8" stroke-linecap="butt"/><path d="M375.21 255.20A43.25 43.25 0 0 1 379.74 252.21" fill="none" stroke="#d9d9d9" stroke-width="1.8" stroke-linecap="butt"/><path d="M422.86 252.21A43.25 43.25 0 0 1 427.39 255.20" fill="none" stroke="#d9d9d9" stroke-width="1.8" stroke-linecap="butt"/><path d="M367.93 262.19A43.25 43.25 0 0 1 371.64 258.22" fill="none" stroke="#d9d9d9" stroke-width="1.8" stroke-linecap="butt"/><path d="M430.96 258.22A43.25 43.25 0 0 1 434.67 262.19" fill="none" stroke="#d9d9d9" stroke-width="1.8" stroke-linecap="butt"/><path d="M362.46 270.67A43.25 43.25 0 0 1 365.15 265.95" fill="none" stroke="#d9d9d9" stroke-width="1.8" stroke-linecap="butt"/><path d="M437.45 265.95A43.25 43.25 0 0 1 440.14 270.67" fill="none" stroke="#d9d9d9" stroke-width="1.8" stroke-linecap="butt"/><path d="M359.11 280.19A43.25 43.25 0 0 1 360.63 274.98" fill="none" stroke="#d9d9d9" stroke-width="1.8" stroke-linecap="butt"/><path d="M441.97 274.98A43.25 43.25 0 0 1 443.49 280.19" fill="none" stroke="#d9d9d9" stroke-width="1.8" stroke-linecap="butt"/><path d="M358.05 290.23A43.25 43.25 0 0 1 358.33 284.80" fill="none" stroke="#d9d9d9" stroke-width="1.8" stroke-linecap="butt"/><path d="M444.27 284.80A43.25 43.25 0 0 1 444.55 290.23" fill="none" stroke="#d9d9d9" stroke-width="1.8" stroke-linecap="butt"/><path d="M359.35 300.24A43.25 43.25 0 0 1 358.36 294.90" fill="none" stroke="#d9d9d9" stroke-width="1.8" stroke-linecap="butt"/><path d="M444.24 294.90A43.25 43.25 0 0 1 443.25 300.24" fill="none" stroke="#d9d9d9" stroke-width="1.8" stroke-linecap="butt"/><path d="M362.94 309.67A43.25 43.25 0 0 1 360.74 304.70" fill="none" stroke="#d9d9d9" stroke-width="1.8" stroke-linecap="butt"/><path d="M441.86 304.70A43.25 43.25 0 0 1 439.66 309.67" fill="none" stroke="#d9d9d9" stroke-width="1.8" stroke-linecap="butt"/><path d="M368.61 318.02A43.25 43.25 0 0 1 365.32 313.70" fill="none" stroke="#d9d9d9" stroke-width="1.8" stroke-linecap="butt"/><path d="M437.28 313.70A43.25 43.25 0 0 1 433.99 318.02" fill="none" stroke="#d9d9d9" stroke-width="1.8" stroke-linecap="butt"/><path d="M376.06 324.82A43.25 43.25 0 0 1 371.86 321.38" fill="none" stroke="#d9d9d9" stroke-width="1.8" stroke-linecap="butt"/><path d="M430.74 321.38A43.25 43.25 0 0 1 426.54 324.82" fill="none" stroke="#d9d9d9" stroke-width="1.8" stroke-linecap="butt"/><circle cx="401.30" cy="285.30" r="26.3" fill="url(#capg)"/><circle cx="401.30" cy="259.50" r="1.3" fill="#0c0c0c"/><circle cx="419.54" cy="267.06" r="1.3" fill="#0c0c0c"/><circle cx="427.10" cy="285.30" r="1.3" fill="#0c0c0c"/><circle cx="419.54" cy="303.54" r="1.3" fill="#0c0c0c"/><circle cx="401.30" cy="311.10" r="1.3" fill="#0c0c0c"/><circle cx="383.06" cy="303.54" r="1.3" fill="#0c0c0c"/><circle cx="375.50" cy="285.30" r="1.3" fill="#0c0c0c"/><circle cx="383.06" cy="267.06" r="1.3" fill="#0c0c0c"/><circle cx="401.30" cy="285.90" r="20.8" fill="none" stroke="#000" stroke-opacity=".16" stroke-width="1.2"/><circle cx="401.30" cy="285.90" r="15.3" fill="#77726c"/><line x1="390.32" y1="286.48" x2="375.34" y2="287.26" stroke="#f9a274" stroke-width="3.8" stroke-linecap="butt"/><circle cx="401.30" cy="285.90" r="13" fill="url(#rA)"/>
<circle cx="508.80" cy="297.20" r="42.2" fill="url(#sh)"/><circle cx="508.80" cy="294.20" r="33.2" fill="url(#baseg)"/><path d="M483.23 321.91A37.7 37.7 0 0 1 481.09 319.77" fill="none" stroke="#d4d4d4" stroke-width="1.4" stroke-linecap="butt"/><path d="M479.21 317.57A37.7 37.7 0 0 1 477.44 315.12" fill="none" stroke="#d4d4d4" stroke-width="1.4" stroke-linecap="butt"/><path d="M475.92 312.65A37.7 37.7 0 0 1 474.55 309.95" fill="none" stroke="#d4d4d4" stroke-width="1.4" stroke-linecap="butt"/><path d="M471.83 301.59A37.7 37.7 0 0 1 471.36 298.60" fill="none" stroke="#d4d4d4" stroke-width="1.4" stroke-linecap="butt"/><path d="M471.13 295.71A37.7 37.7 0 0 1 471.13 292.69" fill="none" stroke="#d4d4d4" stroke-width="1.4" stroke-linecap="butt"/><path d="M471.36 289.80A37.7 37.7 0 0 1 471.83 286.81" fill="none" stroke="#d4d4d4" stroke-width="1.4" stroke-linecap="butt"/><path d="M474.55 278.45A37.7 37.7 0 0 1 475.92 275.75" fill="none" stroke="#d4d4d4" stroke-width="1.4" stroke-linecap="butt"/><path d="M477.44 273.28A37.7 37.7 0 0 1 479.21 270.83" fill="none" stroke="#d4d4d4" stroke-width="1.4" stroke-linecap="butt"/><path d="M481.09 268.63A37.7 37.7 0 0 1 483.23 266.49" fill="none" stroke="#d4d4d4" stroke-width="1.4" stroke-linecap="butt"/><path d="M490.35 261.32A37.7 37.7 0 0 1 493.05 259.95" fill="none" stroke="#d4d4d4" stroke-width="1.4" stroke-linecap="butt"/><path d="M495.72 258.84A37.7 37.7 0 0 1 498.60 257.91" fill="none" stroke="#d4d4d4" stroke-width="1.4" stroke-linecap="butt"/><path d="M501.41 257.23A37.7 37.7 0 0 1 504.40 256.76" fill="none" stroke="#d4d4d4" stroke-width="1.4" stroke-linecap="butt"/><path d="M513.20 256.76A37.7 37.7 0 0 1 516.19 257.23" fill="none" stroke="#d4d4d4" stroke-width="1.4" stroke-linecap="butt"/><path d="M519.00 257.91A37.7 37.7 0 0 1 521.88 258.84" fill="none" stroke="#d4d4d4" stroke-width="1.4" stroke-linecap="butt"/><path d="M524.55 259.95A37.7 37.7 0 0 1 527.25 261.32" fill="none" stroke="#d4d4d4" stroke-width="1.4" stroke-linecap="butt"/><path d="M534.37 266.49A37.7 37.7 0 0 1 536.51 268.63" fill="none" stroke="#d4d4d4" stroke-width="1.4" stroke-linecap="butt"/><path d="M538.39 270.83A37.7 37.7 0 0 1 540.16 273.28" fill="none" stroke="#d4d4d4" stroke-width="1.4" stroke-linecap="butt"/><path d="M541.68 275.75A37.7 37.7 0 0 1 543.05 278.45" fill="none" stroke="#d4d4d4" stroke-width="1.4" stroke-linecap="butt"/><path d="M545.77 286.81A37.7 37.7 0 0 1 546.24 289.80" fill="none" stroke="#d4d4d4" stroke-width="1.4" stroke-linecap="butt"/><path d="M546.47 292.69A37.7 37.7 0 0 1 546.47 295.71" fill="none" stroke="#d4d4d4" stroke-width="1.4" stroke-linecap="butt"/><path d="M546.24 298.60A37.7 37.7 0 0 1 545.77 301.59" fill="none" stroke="#d4d4d4" stroke-width="1.4" stroke-linecap="butt"/><path d="M543.05 309.95A37.7 37.7 0 0 1 541.68 312.65" fill="none" stroke="#d4d4d4" stroke-width="1.4" stroke-linecap="butt"/><path d="M540.16 315.12A37.7 37.7 0 0 1 538.39 317.57" fill="none" stroke="#d4d4d4" stroke-width="1.4" stroke-linecap="butt"/><path d="M536.51 319.77A37.7 37.7 0 0 1 534.37 321.91" fill="none" stroke="#d4d4d4" stroke-width="1.4" stroke-linecap="butt"/><line x1="488.11" y1="322.68" x2="482.94" y2="329.80" stroke="#d4d4d4" stroke-width="3.2" stroke-linecap="butt"/><line x1="475.32" y1="305.08" x2="466.95" y2="307.80" stroke="#d4d4d4" stroke-width="3.2" stroke-linecap="butt"/><line x1="475.32" y1="283.32" x2="466.95" y2="280.60" stroke="#d4d4d4" stroke-width="3.2" stroke-linecap="butt"/><line x1="488.11" y1="265.72" x2="482.94" y2="258.60" stroke="#d4d4d4" stroke-width="3.2" stroke-linecap="butt"/><line x1="529.49" y1="265.72" x2="534.66" y2="258.60" stroke="#d4d4d4" stroke-width="3.2" stroke-linecap="butt"/><line x1="542.28" y1="283.32" x2="550.65" y2="280.60" stroke="#d4d4d4" stroke-width="3.2" stroke-linecap="butt"/><line x1="542.28" y1="305.08" x2="550.65" y2="307.80" stroke="#d4d4d4" stroke-width="3.2" stroke-linecap="butt"/><line x1="529.49" y1="322.68" x2="534.66" y2="329.80" stroke="#d4d4d4" stroke-width="3.2" stroke-linecap="butt"/><circle cx="508.80" cy="290.40" r="24.4" fill="url(#capg)"/><circle cx="508.80" cy="266.50" r="1.3" fill="#0c0c0c"/><circle cx="525.70" cy="273.50" r="1.3" fill="#0c0c0c"/><circle cx="532.70" cy="290.40" r="1.3" fill="#0c0c0c"/><circle cx="525.70" cy="307.30" r="1.3" fill="#0c0c0c"/><circle cx="508.80" cy="314.30" r="1.3" fill="#0c0c0c"/><circle cx="491.90" cy="307.30" r="1.3" fill="#0c0c0c"/><circle cx="484.90" cy="290.40" r="1.3" fill="#0c0c0c"/><circle cx="491.90" cy="273.50" r="1.3" fill="#0c0c0c"/><circle cx="508.80" cy="291.00" r="18.9" fill="none" stroke="#000" stroke-opacity=".16" stroke-width="1.2"/><circle cx="508.80" cy="290.40" r="14.5" fill="url(#ringg)"/><circle cx="508.80" cy="290.40" r="11.25" fill="#000"/><circle cx="509.96" cy="268.23" r="3.7" fill="#a07830" opacity=".5"/><circle cx="509.96" cy="268.23" r="2.2" fill="#f8dfa2"/>
<circle cx="611.20" cy="297.20" r="42.2" fill="url(#sh)"/><circle cx="611.20" cy="294.20" r="33.2" fill="url(#baseg)"/><path d="M585.63 321.91A37.7 37.7 0 0 1 583.49 319.77" fill="none" stroke="#d4d4d4" stroke-width="1.4" stroke-linecap="butt"/><path d="M581.61 317.57A37.7 37.7 0 0 1 579.84 315.12" fill="none" stroke="#d4d4d4" stroke-width="1.4" stroke-linecap="butt"/><path d="M578.32 312.65A37.7 37.7 0 0 1 576.95 309.95" fill="none" stroke="#d4d4d4" stroke-width="1.4" stroke-linecap="butt"/><path d="M574.23 301.59A37.7 37.7 0 0 1 573.76 298.60" fill="none" stroke="#d4d4d4" stroke-width="1.4" stroke-linecap="butt"/><path d="M573.53 295.71A37.7 37.7 0 0 1 573.53 292.69" fill="none" stroke="#d4d4d4" stroke-width="1.4" stroke-linecap="butt"/><path d="M573.76 289.80A37.7 37.7 0 0 1 574.23 286.81" fill="none" stroke="#d4d4d4" stroke-width="1.4" stroke-linecap="butt"/><path d="M576.95 278.45A37.7 37.7 0 0 1 578.32 275.75" fill="none" stroke="#d4d4d4" stroke-width="1.4" stroke-linecap="butt"/><path d="M579.84 273.28A37.7 37.7 0 0 1 581.61 270.83" fill="none" stroke="#d4d4d4" stroke-width="1.4" stroke-linecap="butt"/><path d="M583.49 268.63A37.7 37.7 0 0 1 585.63 266.49" fill="none" stroke="#d4d4d4" stroke-width="1.4" stroke-linecap="butt"/><path d="M592.75 261.32A37.7 37.7 0 0 1 595.45 259.95" fill="none" stroke="#d4d4d4" stroke-width="1.4" stroke-linecap="butt"/><path d="M598.12 258.84A37.7 37.7 0 0 1 601.00 257.91" fill="none" stroke="#d4d4d4" stroke-width="1.4" stroke-linecap="butt"/><path d="M603.81 257.23A37.7 37.7 0 0 1 606.80 256.76" fill="none" stroke="#d4d4d4" stroke-width="1.4" stroke-linecap="butt"/><path d="M615.60 256.76A37.7 37.7 0 0 1 618.59 257.23" fill="none" stroke="#d4d4d4" stroke-width="1.4" stroke-linecap="butt"/><path d="M621.40 257.91A37.7 37.7 0 0 1 624.28 258.84" fill="none" stroke="#d4d4d4" stroke-width="1.4" stroke-linecap="butt"/><path d="M626.95 259.95A37.7 37.7 0 0 1 629.65 261.32" fill="none" stroke="#d4d4d4" stroke-width="1.4" stroke-linecap="butt"/><path d="M636.77 266.49A37.7 37.7 0 0 1 638.91 268.63" fill="none" stroke="#d4d4d4" stroke-width="1.4" stroke-linecap="butt"/><path d="M640.79 270.83A37.7 37.7 0 0 1 642.56 273.28" fill="none" stroke="#d4d4d4" stroke-width="1.4" stroke-linecap="butt"/><path d="M644.08 275.75A37.7 37.7 0 0 1 645.45 278.45" fill="none" stroke="#d4d4d4" stroke-width="1.4" stroke-linecap="butt"/><path d="M648.17 286.81A37.7 37.7 0 0 1 648.64 289.80" fill="none" stroke="#d4d4d4" stroke-width="1.4" stroke-linecap="butt"/><path d="M648.87 292.69A37.7 37.7 0 0 1 648.87 295.71" fill="none" stroke="#d4d4d4" stroke-width="1.4" stroke-linecap="butt"/><path d="M648.64 298.60A37.7 37.7 0 0 1 648.17 301.59" fill="none" stroke="#d4d4d4" stroke-width="1.4" stroke-linecap="butt"/><path d="M645.45 309.95A37.7 37.7 0 0 1 644.08 312.65" fill="none" stroke="#d4d4d4" stroke-width="1.4" stroke-linecap="butt"/><path d="M642.56 315.12A37.7 37.7 0 0 1 640.79 317.57" fill="none" stroke="#d4d4d4" stroke-width="1.4" stroke-linecap="butt"/><path d="M638.91 319.77A37.7 37.7 0 0 1 636.77 321.91" fill="none" stroke="#d4d4d4" stroke-width="1.4" stroke-linecap="butt"/><line x1="590.51" y1="322.68" x2="585.34" y2="329.80" stroke="#d4d4d4" stroke-width="3.2" stroke-linecap="butt"/><line x1="577.72" y1="305.08" x2="569.35" y2="307.80" stroke="#d4d4d4" stroke-width="3.2" stroke-linecap="butt"/><line x1="577.72" y1="283.32" x2="569.35" y2="280.60" stroke="#d4d4d4" stroke-width="3.2" stroke-linecap="butt"/><line x1="590.51" y1="265.72" x2="585.34" y2="258.60" stroke="#d4d4d4" stroke-width="3.2" stroke-linecap="butt"/><line x1="631.89" y1="265.72" x2="637.06" y2="258.60" stroke="#d4d4d4" stroke-width="3.2" stroke-linecap="butt"/><line x1="644.68" y1="283.32" x2="653.05" y2="280.60" stroke="#d4d4d4" stroke-width="3.2" stroke-linecap="butt"/><line x1="644.68" y1="305.08" x2="653.05" y2="307.80" stroke="#d4d4d4" stroke-width="3.2" stroke-linecap="butt"/><line x1="631.89" y1="322.68" x2="637.06" y2="329.80" stroke="#d4d4d4" stroke-width="3.2" stroke-linecap="butt"/><circle cx="611.20" cy="290.40" r="24.4" fill="url(#capg)"/><circle cx="611.20" cy="266.50" r="1.3" fill="#0c0c0c"/><circle cx="628.10" cy="273.50" r="1.3" fill="#0c0c0c"/><circle cx="635.10" cy="290.40" r="1.3" fill="#0c0c0c"/><circle cx="628.10" cy="307.30" r="1.3" fill="#0c0c0c"/><circle cx="611.20" cy="314.30" r="1.3" fill="#0c0c0c"/><circle cx="594.30" cy="307.30" r="1.3" fill="#0c0c0c"/><circle cx="587.30" cy="290.40" r="1.3" fill="#0c0c0c"/><circle cx="594.30" cy="273.50" r="1.3" fill="#0c0c0c"/><circle cx="611.20" cy="291.00" r="18.9" fill="none" stroke="#000" stroke-opacity=".16" stroke-width="1.2"/><circle cx="611.20" cy="290.40" r="14.5" fill="url(#ringg)"/><circle cx="611.20" cy="290.40" r="11.25" fill="#000"/><circle cx="612.36" cy="268.23" r="3.7" fill="#a07830" opacity=".5"/><circle cx="612.36" cy="268.23" r="2.2" fill="#f8dfa2"/>
<circle cx="401.25" cy="435.80" r="41.3" fill="url(#sh)"/><circle cx="401.25" cy="432.80" r="35.3" fill="url(#baseg)"/><line x1="380.32" y1="461.60" x2="372.74" y2="472.04" stroke="#b9b9b9" stroke-width="3.0" stroke-linecap="butt"/><line x1="376.08" y1="457.97" x2="370.49" y2="463.56" stroke="#b9b9b9" stroke-width="3.0" stroke-linecap="butt"/><line x1="372.45" y1="453.73" x2="366.06" y2="458.37" stroke="#b9b9b9" stroke-width="3.0" stroke-linecap="butt"/><line x1="369.53" y1="448.96" x2="362.49" y2="452.55" stroke="#b9b9b9" stroke-width="3.0" stroke-linecap="butt"/><line x1="367.39" y1="443.80" x2="355.12" y2="447.79" stroke="#b9b9b9" stroke-width="3.0" stroke-linecap="butt"/><line x1="366.09" y1="438.37" x2="358.29" y2="439.60" stroke="#b9b9b9" stroke-width="3.0" stroke-linecap="butt"/><line x1="365.65" y1="432.80" x2="357.75" y2="432.80" stroke="#b9b9b9" stroke-width="3.0" stroke-linecap="butt"/><line x1="366.09" y1="427.23" x2="358.29" y2="426.00" stroke="#b9b9b9" stroke-width="3.0" stroke-linecap="butt"/><line x1="367.39" y1="421.80" x2="355.12" y2="417.81" stroke="#b9b9b9" stroke-width="3.0" stroke-linecap="butt"/><line x1="369.53" y1="416.64" x2="362.49" y2="413.05" stroke="#b9b9b9" stroke-width="3.0" stroke-linecap="butt"/><line x1="372.45" y1="411.87" x2="366.06" y2="407.23" stroke="#b9b9b9" stroke-width="3.0" stroke-linecap="butt"/><line x1="376.08" y1="407.63" x2="370.49" y2="402.04" stroke="#b9b9b9" stroke-width="3.0" stroke-linecap="butt"/><line x1="380.32" y1="404.00" x2="372.74" y2="393.56" stroke="#b9b9b9" stroke-width="3.0" stroke-linecap="butt"/><line x1="385.09" y1="401.08" x2="381.50" y2="394.04" stroke="#b9b9b9" stroke-width="3.0" stroke-linecap="butt"/><line x1="390.25" y1="398.94" x2="387.81" y2="391.43" stroke="#b9b9b9" stroke-width="3.0" stroke-linecap="butt"/><line x1="395.68" y1="397.64" x2="394.45" y2="389.84" stroke="#b9b9b9" stroke-width="3.0" stroke-linecap="butt"/><line x1="401.25" y1="397.20" x2="401.25" y2="383.80" stroke="#b9b9b9" stroke-width="3.0" stroke-linecap="butt"/><line x1="406.82" y1="397.64" x2="408.05" y2="389.84" stroke="#b9b9b9" stroke-width="3.0" stroke-linecap="butt"/><line x1="412.25" y1="398.94" x2="414.69" y2="391.43" stroke="#b9b9b9" stroke-width="3.0" stroke-linecap="butt"/><line x1="417.41" y1="401.08" x2="421.00" y2="394.04" stroke="#b9b9b9" stroke-width="3.0" stroke-linecap="butt"/><line x1="422.18" y1="404.00" x2="429.76" y2="393.56" stroke="#b9b9b9" stroke-width="3.0" stroke-linecap="butt"/><line x1="426.42" y1="407.63" x2="432.01" y2="402.04" stroke="#b9b9b9" stroke-width="3.0" stroke-linecap="butt"/><line x1="430.05" y1="411.87" x2="436.44" y2="407.23" stroke="#b9b9b9" stroke-width="3.0" stroke-linecap="butt"/><line x1="432.97" y1="416.64" x2="440.01" y2="413.05" stroke="#b9b9b9" stroke-width="3.0" stroke-linecap="butt"/><line x1="435.11" y1="421.80" x2="447.38" y2="417.81" stroke="#b9b9b9" stroke-width="3.0" stroke-linecap="butt"/><line x1="436.41" y1="427.23" x2="444.21" y2="426.00" stroke="#b9b9b9" stroke-width="3.0" stroke-linecap="butt"/><line x1="436.85" y1="432.80" x2="444.75" y2="432.80" stroke="#b9b9b9" stroke-width="3.0" stroke-linecap="butt"/><line x1="436.41" y1="438.37" x2="444.21" y2="439.60" stroke="#b9b9b9" stroke-width="3.0" stroke-linecap="butt"/><line x1="435.11" y1="443.80" x2="447.38" y2="447.79" stroke="#b9b9b9" stroke-width="3.0" stroke-linecap="butt"/><line x1="432.97" y1="448.96" x2="440.01" y2="452.55" stroke="#b9b9b9" stroke-width="3.0" stroke-linecap="butt"/><line x1="430.05" y1="453.73" x2="436.44" y2="458.37" stroke="#b9b9b9" stroke-width="3.0" stroke-linecap="butt"/><line x1="426.42" y1="457.97" x2="432.01" y2="463.56" stroke="#b9b9b9" stroke-width="3.0" stroke-linecap="butt"/><line x1="422.18" y1="461.60" x2="429.76" y2="472.04" stroke="#b9b9b9" stroke-width="3.0" stroke-linecap="butt"/><circle cx="401.25" cy="429.05" r="27.25" fill="url(#capg)"/><circle cx="411.49" cy="404.34" r="1.3" fill="#0c0c0c"/><circle cx="425.96" cy="418.81" r="1.3" fill="#0c0c0c"/><circle cx="425.96" cy="439.29" r="1.3" fill="#0c0c0c"/><circle cx="411.49" cy="453.76" r="1.3" fill="#0c0c0c"/><circle cx="391.01" cy="453.76" r="1.3" fill="#0c0c0c"/><circle cx="376.54" cy="439.29" r="1.3" fill="#0c0c0c"/><circle cx="376.54" cy="418.81" r="1.3" fill="#0c0c0c"/><circle cx="391.01" cy="404.34" r="1.3" fill="#0c0c0c"/><circle cx="401.25" cy="429.65" r="21.75" fill="none" stroke="#000" stroke-opacity=".16" stroke-width="1.2"/><circle cx="401.25" cy="429.05" r="15.75" fill="#77726c"/><line x1="411.95" y1="425.57" x2="425.98" y2="421.02" stroke="#f68d5a" stroke-width="3.8" stroke-linecap="butt"/><circle cx="401.25" cy="429.05" r="13.25" fill="url(#B)"/>
<circle cx="508.75" cy="430.30" r="41.5" fill="url(#sh)"/><circle cx="508.75" cy="427.30" r="36.5" fill="url(#baseg)"/><path d="M483.15 455.04A37.75 37.75 0 0 1 481.01 452.90" fill="none" stroke="#a4a4a4" stroke-width="1.1" stroke-linecap="butt"/><path d="M479.12 450.70A37.75 37.75 0 0 1 477.34 448.25" fill="none" stroke="#a4a4a4" stroke-width="1.1" stroke-linecap="butt"/><path d="M475.83 445.77A37.75 37.75 0 0 1 474.45 443.07" fill="none" stroke="#a4a4a4" stroke-width="1.1" stroke-linecap="butt"/><path d="M471.73 434.70A37.75 37.75 0 0 1 471.26 431.70" fill="none" stroke="#a4a4a4" stroke-width="1.1" stroke-linecap="butt"/><path d="M471.03 428.81A37.75 37.75 0 0 1 471.03 425.79" fill="none" stroke="#a4a4a4" stroke-width="1.1" stroke-linecap="butt"/><path d="M471.26 422.90A37.75 37.75 0 0 1 471.73 419.90" fill="none" stroke="#a4a4a4" stroke-width="1.1" stroke-linecap="butt"/><path d="M474.45 411.53A37.75 37.75 0 0 1 475.83 408.83" fill="none" stroke="#a4a4a4" stroke-width="1.1" stroke-linecap="butt"/><path d="M477.34 406.35A37.75 37.75 0 0 1 479.12 403.90" fill="none" stroke="#a4a4a4" stroke-width="1.1" stroke-linecap="butt"/><path d="M481.01 401.70A37.75 37.75 0 0 1 483.15 399.56" fill="none" stroke="#a4a4a4" stroke-width="1.1" stroke-linecap="butt"/><path d="M490.28 394.38A37.75 37.75 0 0 1 492.98 393.00" fill="none" stroke="#a4a4a4" stroke-width="1.1" stroke-linecap="butt"/><path d="M495.65 391.89A37.75 37.75 0 0 1 498.53 390.96" fill="none" stroke="#a4a4a4" stroke-width="1.1" stroke-linecap="butt"/><path d="M501.35 390.28A37.75 37.75 0 0 1 504.35 389.81" fill="none" stroke="#a4a4a4" stroke-width="1.1" stroke-linecap="butt"/><path d="M513.15 389.81A37.75 37.75 0 0 1 516.15 390.28" fill="none" stroke="#a4a4a4" stroke-width="1.1" stroke-linecap="butt"/><path d="M518.97 390.96A37.75 37.75 0 0 1 521.85 391.89" fill="none" stroke="#a4a4a4" stroke-width="1.1" stroke-linecap="butt"/><path d="M524.52 393.00A37.75 37.75 0 0 1 527.22 394.38" fill="none" stroke="#a4a4a4" stroke-width="1.1" stroke-linecap="butt"/><path d="M534.35 399.56A37.75 37.75 0 0 1 536.49 401.70" fill="none" stroke="#a4a4a4" stroke-width="1.1" stroke-linecap="butt"/><path d="M538.38 403.90A37.75 37.75 0 0 1 540.16 406.35" fill="none" stroke="#a4a4a4" stroke-width="1.1" stroke-linecap="butt"/><path d="M541.67 408.83A37.75 37.75 0 0 1 543.05 411.53" fill="none" stroke="#a4a4a4" stroke-width="1.1" stroke-linecap="butt"/><path d="M545.77 419.90A37.75 37.75 0 0 1 546.24 422.90" fill="none" stroke="#a4a4a4" stroke-width="1.1" stroke-linecap="butt"/><path d="M546.47 425.79A37.75 37.75 0 0 1 546.47 428.81" fill="none" stroke="#a4a4a4" stroke-width="1.1" stroke-linecap="butt"/><path d="M546.24 431.70A37.75 37.75 0 0 1 545.77 434.70" fill="none" stroke="#a4a4a4" stroke-width="1.1" stroke-linecap="butt"/><path d="M543.05 443.07A37.75 37.75 0 0 1 541.67 445.77" fill="none" stroke="#a4a4a4" stroke-width="1.1" stroke-linecap="butt"/><path d="M540.16 448.25A37.75 37.75 0 0 1 538.38 450.70" fill="none" stroke="#a4a4a4" stroke-width="1.1" stroke-linecap="butt"/><path d="M536.49 452.90A37.75 37.75 0 0 1 534.35 455.04" fill="none" stroke="#a4a4a4" stroke-width="1.1" stroke-linecap="butt"/><line x1="487.47" y1="456.59" x2="482.89" y2="462.90" stroke="#b9b9b9" stroke-width="3.1" stroke-linecap="butt"/><line x1="474.32" y1="438.49" x2="466.90" y2="440.90" stroke="#b9b9b9" stroke-width="3.1" stroke-linecap="butt"/><line x1="474.32" y1="416.11" x2="466.90" y2="413.70" stroke="#b9b9b9" stroke-width="3.1" stroke-linecap="butt"/><line x1="487.47" y1="398.01" x2="482.89" y2="391.70" stroke="#b9b9b9" stroke-width="3.1" stroke-linecap="butt"/><line x1="508.75" y1="391.10" x2="508.75" y2="383.30" stroke="#b9b9b9" stroke-width="3.1" stroke-linecap="butt"/><line x1="530.03" y1="398.01" x2="534.61" y2="391.70" stroke="#b9b9b9" stroke-width="3.1" stroke-linecap="butt"/><line x1="543.18" y1="416.11" x2="550.60" y2="413.70" stroke="#b9b9b9" stroke-width="3.1" stroke-linecap="butt"/><line x1="543.18" y1="438.49" x2="550.60" y2="440.90" stroke="#b9b9b9" stroke-width="3.1" stroke-linecap="butt"/><line x1="530.03" y1="456.59" x2="534.61" y2="462.90" stroke="#b9b9b9" stroke-width="3.1" stroke-linecap="butt"/><line x1="491.78" y1="441.02" x2="488.81" y2="443.99" stroke="#050505" stroke-width="3.4" stroke-linecap="butt"/><circle cx="508.75" cy="424.05" r="24.75" fill="url(#capg)"/><circle cx="525.90" cy="406.90" r="1.3" fill="#0c0c0c"/><circle cx="533.00" cy="424.05" r="1.3" fill="#0c0c0c"/><circle cx="525.90" cy="441.20" r="1.3" fill="#0c0c0c"/><circle cx="508.75" cy="448.30" r="1.3" fill="#0c0c0c"/><circle cx="491.60" cy="441.20" r="1.3" fill="#0c0c0c"/><circle cx="484.50" cy="424.05" r="1.3" fill="#0c0c0c"/><circle cx="491.60" cy="406.90" r="1.3" fill="#0c0c0c"/><circle cx="508.75" cy="399.80" r="1.3" fill="#0c0c0c"/><circle cx="508.75" cy="424.65" r="19.25" fill="none" stroke="#000" stroke-opacity=".16" stroke-width="1.2"/><circle cx="508.75" cy="424.45" r="14.5" fill="#77726c"/><line x1="501.86" y1="431.34" x2="491.78" y2="441.42" stroke="#f68d5a" stroke-width="3.8" stroke-linecap="butt"/><circle cx="508.75" cy="424.45" r="11.75" fill="url(#B)"/>
<circle cx="611.20" cy="430.30" r="42.2" fill="url(#sh)"/><circle cx="611.20" cy="427.30" r="33.2" fill="url(#baseg)"/><path d="M585.63 455.01A37.7 37.7 0 0 1 583.49 452.87" fill="none" stroke="#a4a4a4" stroke-width="1.1" stroke-linecap="butt"/><path d="M581.61 450.67A37.7 37.7 0 0 1 579.84 448.22" fill="none" stroke="#a4a4a4" stroke-width="1.1" stroke-linecap="butt"/><path d="M578.32 445.75A37.7 37.7 0 0 1 576.95 443.05" fill="none" stroke="#a4a4a4" stroke-width="1.1" stroke-linecap="butt"/><path d="M574.23 434.69A37.7 37.7 0 0 1 573.76 431.70" fill="none" stroke="#a4a4a4" stroke-width="1.1" stroke-linecap="butt"/><path d="M573.53 428.81A37.7 37.7 0 0 1 573.53 425.79" fill="none" stroke="#a4a4a4" stroke-width="1.1" stroke-linecap="butt"/><path d="M573.76 422.90A37.7 37.7 0 0 1 574.23 419.91" fill="none" stroke="#a4a4a4" stroke-width="1.1" stroke-linecap="butt"/><path d="M576.95 411.55A37.7 37.7 0 0 1 578.32 408.85" fill="none" stroke="#a4a4a4" stroke-width="1.1" stroke-linecap="butt"/><path d="M579.84 406.38A37.7 37.7 0 0 1 581.61 403.93" fill="none" stroke="#a4a4a4" stroke-width="1.1" stroke-linecap="butt"/><path d="M583.49 401.73A37.7 37.7 0 0 1 585.63 399.59" fill="none" stroke="#a4a4a4" stroke-width="1.1" stroke-linecap="butt"/><path d="M592.75 394.42A37.7 37.7 0 0 1 595.45 393.05" fill="none" stroke="#a4a4a4" stroke-width="1.1" stroke-linecap="butt"/><path d="M598.12 391.94A37.7 37.7 0 0 1 601.00 391.01" fill="none" stroke="#a4a4a4" stroke-width="1.1" stroke-linecap="butt"/><path d="M603.81 390.33A37.7 37.7 0 0 1 606.80 389.86" fill="none" stroke="#a4a4a4" stroke-width="1.1" stroke-linecap="butt"/><path d="M615.60 389.86A37.7 37.7 0 0 1 618.59 390.33" fill="none" stroke="#a4a4a4" stroke-width="1.1" stroke-linecap="butt"/><path d="M621.40 391.01A37.7 37.7 0 0 1 624.28 391.94" fill="none" stroke="#a4a4a4" stroke-width="1.1" stroke-linecap="butt"/><path d="M626.95 393.05A37.7 37.7 0 0 1 629.65 394.42" fill="none" stroke="#a4a4a4" stroke-width="1.1" stroke-linecap="butt"/><path d="M636.77 399.59A37.7 37.7 0 0 1 638.91 401.73" fill="none" stroke="#a4a4a4" stroke-width="1.1" stroke-linecap="butt"/><path d="M640.79 403.93A37.7 37.7 0 0 1 642.56 406.38" fill="none" stroke="#a4a4a4" stroke-width="1.1" stroke-linecap="butt"/><path d="M644.08 408.85A37.7 37.7 0 0 1 645.45 411.55" fill="none" stroke="#a4a4a4" stroke-width="1.1" stroke-linecap="butt"/><path d="M648.17 419.91A37.7 37.7 0 0 1 648.64 422.90" fill="none" stroke="#a4a4a4" stroke-width="1.1" stroke-linecap="butt"/><path d="M648.87 425.79A37.7 37.7 0 0 1 648.87 428.81" fill="none" stroke="#a4a4a4" stroke-width="1.1" stroke-linecap="butt"/><path d="M648.64 431.70A37.7 37.7 0 0 1 648.17 434.69" fill="none" stroke="#a4a4a4" stroke-width="1.1" stroke-linecap="butt"/><path d="M645.45 443.05A37.7 37.7 0 0 1 644.08 445.75" fill="none" stroke="#a4a4a4" stroke-width="1.1" stroke-linecap="butt"/><path d="M642.56 448.22A37.7 37.7 0 0 1 640.79 450.67" fill="none" stroke="#a4a4a4" stroke-width="1.1" stroke-linecap="butt"/><path d="M638.91 452.87A37.7 37.7 0 0 1 636.77 455.01" fill="none" stroke="#a4a4a4" stroke-width="1.1" stroke-linecap="butt"/><line x1="590.51" y1="455.78" x2="585.34" y2="462.90" stroke="#b9b9b9" stroke-width="3.2" stroke-linecap="butt"/><line x1="577.72" y1="438.18" x2="569.35" y2="440.90" stroke="#b9b9b9" stroke-width="3.2" stroke-linecap="butt"/><line x1="577.72" y1="416.42" x2="569.35" y2="413.70" stroke="#b9b9b9" stroke-width="3.2" stroke-linecap="butt"/><line x1="590.51" y1="398.82" x2="585.34" y2="391.70" stroke="#b9b9b9" stroke-width="3.2" stroke-linecap="butt"/><line x1="631.89" y1="398.82" x2="637.06" y2="391.70" stroke="#b9b9b9" stroke-width="3.2" stroke-linecap="butt"/><line x1="644.68" y1="416.42" x2="653.05" y2="413.70" stroke="#b9b9b9" stroke-width="3.2" stroke-linecap="butt"/><line x1="644.68" y1="438.18" x2="653.05" y2="440.90" stroke="#b9b9b9" stroke-width="3.2" stroke-linecap="butt"/><line x1="631.89" y1="455.78" x2="637.06" y2="462.90" stroke="#b9b9b9" stroke-width="3.2" stroke-linecap="butt"/><circle cx="611.20" cy="423.50" r="24.4" fill="url(#capg)"/><circle cx="611.20" cy="399.60" r="1.3" fill="#0c0c0c"/><circle cx="628.10" cy="406.60" r="1.3" fill="#0c0c0c"/><circle cx="635.10" cy="423.50" r="1.3" fill="#0c0c0c"/><circle cx="628.10" cy="440.40" r="1.3" fill="#0c0c0c"/><circle cx="611.20" cy="447.40" r="1.3" fill="#0c0c0c"/><circle cx="594.30" cy="440.40" r="1.3" fill="#0c0c0c"/><circle cx="587.30" cy="423.50" r="1.3" fill="#0c0c0c"/><circle cx="594.30" cy="406.60" r="1.3" fill="#0c0c0c"/><circle cx="611.20" cy="424.10" r="18.9" fill="none" stroke="#000" stroke-opacity=".16" stroke-width="1.2"/><circle cx="611.20" cy="423.50" r="14.5" fill="url(#ringg)"/><circle cx="611.20" cy="423.50" r="11.25" fill="#000"/><circle cx="612.36" cy="401.33" r="3.7" fill="#a07830" opacity=".5"/><circle cx="612.36" cy="401.33" r="2.2" fill="#f79468"/>
<circle cx="401.30" cy="544.00" r="44" fill="url(#sh)"/><circle cx="401.30" cy="541.00" r="37" fill="url(#baseg)"/><path d="M393.57 498.45A43.25 43.25 0 0 1 398.96 497.81" fill="none" stroke="#b4b4b4" stroke-width="1.4" stroke-linecap="butt"/><path d="M403.64 497.81A43.25 43.25 0 0 1 409.03 498.45" fill="none" stroke="#b4b4b4" stroke-width="1.4" stroke-linecap="butt"/><path d="M383.92 501.40A43.25 43.25 0 0 1 389.02 499.53" fill="none" stroke="#b4b4b4" stroke-width="1.4" stroke-linecap="butt"/><path d="M413.58 499.53A43.25 43.25 0 0 1 418.68 501.40" fill="none" stroke="#b4b4b4" stroke-width="1.4" stroke-linecap="butt"/><path d="M375.21 506.50A43.25 43.25 0 0 1 379.74 503.51" fill="none" stroke="#b4b4b4" stroke-width="1.4" stroke-linecap="butt"/><path d="M422.86 503.51A43.25 43.25 0 0 1 427.39 506.50" fill="none" stroke="#b4b4b4" stroke-width="1.4" stroke-linecap="butt"/><path d="M367.93 513.49A43.25 43.25 0 0 1 371.64 509.52" fill="none" stroke="#b4b4b4" stroke-width="1.4" stroke-linecap="butt"/><path d="M430.96 509.52A43.25 43.25 0 0 1 434.67 513.49" fill="none" stroke="#b4b4b4" stroke-width="1.4" stroke-linecap="butt"/><path d="M362.46 521.97A43.25 43.25 0 0 1 365.15 517.25" fill="none" stroke="#b4b4b4" stroke-width="1.4" stroke-linecap="butt"/><path d="M437.45 517.25A43.25 43.25 0 0 1 440.14 521.97" fill="none" stroke="#b4b4b4" stroke-width="1.4" stroke-linecap="butt"/><path d="M359.11 531.49A43.25 43.25 0 0 1 360.63 526.28" fill="none" stroke="#b4b4b4" stroke-width="1.4" stroke-linecap="butt"/><path d="M441.97 526.28A43.25 43.25 0 0 1 443.49 531.49" fill="none" stroke="#b4b4b4" stroke-width="1.4" stroke-linecap="butt"/><path d="M358.05 541.53A43.25 43.25 0 0 1 358.33 536.10" fill="none" stroke="#b4b4b4" stroke-width="1.4" stroke-linecap="butt"/><path d="M444.27 536.10A43.25 43.25 0 0 1 444.55 541.53" fill="none" stroke="#b4b4b4" stroke-width="1.4" stroke-linecap="butt"/><path d="M359.35 551.54A43.25 43.25 0 0 1 358.36 546.20" fill="none" stroke="#b4b4b4" stroke-width="1.4" stroke-linecap="butt"/><path d="M444.24 546.20A43.25 43.25 0 0 1 443.25 551.54" fill="none" stroke="#b4b4b4" stroke-width="1.4" stroke-linecap="butt"/><path d="M362.94 560.97A43.25 43.25 0 0 1 360.74 556.00" fill="none" stroke="#b4b4b4" stroke-width="1.4" stroke-linecap="butt"/><path d="M441.86 556.00A43.25 43.25 0 0 1 439.66 560.97" fill="none" stroke="#b4b4b4" stroke-width="1.4" stroke-linecap="butt"/><path d="M368.61 569.32A43.25 43.25 0 0 1 365.32 565.00" fill="none" stroke="#b4b4b4" stroke-width="1.4" stroke-linecap="butt"/><path d="M437.28 565.00A43.25 43.25 0 0 1 433.99 569.32" fill="none" stroke="#b4b4b4" stroke-width="1.4" stroke-linecap="butt"/><path d="M376.06 576.12A43.25 43.25 0 0 1 371.86 572.68" fill="none" stroke="#b4b4b4" stroke-width="1.4" stroke-linecap="butt"/><path d="M430.74 572.68A43.25 43.25 0 0 1 426.54 576.12" fill="none" stroke="#b4b4b4" stroke-width="1.4" stroke-linecap="butt"/><circle cx="401.30" cy="536.60" r="26.3" fill="url(#capg)"/><circle cx="401.30" cy="510.80" r="1.3" fill="#0c0c0c"/><circle cx="419.54" cy="518.36" r="1.3" fill="#0c0c0c"/><circle cx="427.10" cy="536.60" r="1.3" fill="#0c0c0c"/><circle cx="419.54" cy="554.84" r="1.3" fill="#0c0c0c"/><circle cx="401.30" cy="562.40" r="1.3" fill="#0c0c0c"/><circle cx="383.06" cy="554.84" r="1.3" fill="#0c0c0c"/><circle cx="375.50" cy="536.60" r="1.3" fill="#0c0c0c"/><circle cx="383.06" cy="518.36" r="1.3" fill="#0c0c0c"/><circle cx="401.30" cy="537.20" r="20.8" fill="none" stroke="#000" stroke-opacity=".16" stroke-width="1.2"/><circle cx="401.30" cy="537.20" r="15.3" fill="#77726c"/><line x1="390.31" y1="537.58" x2="375.32" y2="538.11" stroke="#f68d5a" stroke-width="3.8" stroke-linecap="butt"/><circle cx="401.30" cy="537.20" r="13" fill="url(#B)"/>
<circle cx="508.80" cy="548.50" r="42.2" fill="url(#sh)"/><circle cx="508.80" cy="545.50" r="33.2" fill="url(#baseg)"/><path d="M483.23 573.21A37.7 37.7 0 0 1 481.09 571.07" fill="none" stroke="#a4a4a4" stroke-width="1.1" stroke-linecap="butt"/><path d="M479.21 568.87A37.7 37.7 0 0 1 477.44 566.42" fill="none" stroke="#a4a4a4" stroke-width="1.1" stroke-linecap="butt"/><path d="M475.92 563.95A37.7 37.7 0 0 1 474.55 561.25" fill="none" stroke="#a4a4a4" stroke-width="1.1" stroke-linecap="butt"/><path d="M471.83 552.89A37.7 37.7 0 0 1 471.36 549.90" fill="none" stroke="#a4a4a4" stroke-width="1.1" stroke-linecap="butt"/><path d="M471.13 547.01A37.7 37.7 0 0 1 471.13 543.99" fill="none" stroke="#a4a4a4" stroke-width="1.1" stroke-linecap="butt"/><path d="M471.36 541.10A37.7 37.7 0 0 1 471.83 538.11" fill="none" stroke="#a4a4a4" stroke-width="1.1" stroke-linecap="butt"/><path d="M474.55 529.75A37.7 37.7 0 0 1 475.92 527.05" fill="none" stroke="#a4a4a4" stroke-width="1.1" stroke-linecap="butt"/><path d="M477.44 524.58A37.7 37.7 0 0 1 479.21 522.13" fill="none" stroke="#a4a4a4" stroke-width="1.1" stroke-linecap="butt"/><path d="M481.09 519.93A37.7 37.7 0 0 1 483.23 517.79" fill="none" stroke="#a4a4a4" stroke-width="1.1" stroke-linecap="butt"/><path d="M490.35 512.62A37.7 37.7 0 0 1 493.05 511.25" fill="none" stroke="#a4a4a4" stroke-width="1.1" stroke-linecap="butt"/><path d="M495.72 510.14A37.7 37.7 0 0 1 498.60 509.21" fill="none" stroke="#a4a4a4" stroke-width="1.1" stroke-linecap="butt"/><path d="M501.41 508.53A37.7 37.7 0 0 1 504.40 508.06" fill="none" stroke="#a4a4a4" stroke-width="1.1" stroke-linecap="butt"/><path d="M513.20 508.06A37.7 37.7 0 0 1 516.19 508.53" fill="none" stroke="#a4a4a4" stroke-width="1.1" stroke-linecap="butt"/><path d="M519.00 509.21A37.7 37.7 0 0 1 521.88 510.14" fill="none" stroke="#a4a4a4" stroke-width="1.1" stroke-linecap="butt"/><path d="M524.55 511.25A37.7 37.7 0 0 1 527.25 512.62" fill="none" stroke="#a4a4a4" stroke-width="1.1" stroke-linecap="butt"/><path d="M534.37 517.79A37.7 37.7 0 0 1 536.51 519.93" fill="none" stroke="#a4a4a4" stroke-width="1.1" stroke-linecap="butt"/><path d="M538.39 522.13A37.7 37.7 0 0 1 540.16 524.58" fill="none" stroke="#a4a4a4" stroke-width="1.1" stroke-linecap="butt"/><path d="M541.68 527.05A37.7 37.7 0 0 1 543.05 529.75" fill="none" stroke="#a4a4a4" stroke-width="1.1" stroke-linecap="butt"/><path d="M545.77 538.11A37.7 37.7 0 0 1 546.24 541.10" fill="none" stroke="#a4a4a4" stroke-width="1.1" stroke-linecap="butt"/><path d="M546.47 543.99A37.7 37.7 0 0 1 546.47 547.01" fill="none" stroke="#a4a4a4" stroke-width="1.1" stroke-linecap="butt"/><path d="M546.24 549.90A37.7 37.7 0 0 1 545.77 552.89" fill="none" stroke="#a4a4a4" stroke-width="1.1" stroke-linecap="butt"/><path d="M543.05 561.25A37.7 37.7 0 0 1 541.68 563.95" fill="none" stroke="#a4a4a4" stroke-width="1.1" stroke-linecap="butt"/><path d="M540.16 566.42A37.7 37.7 0 0 1 538.39 568.87" fill="none" stroke="#a4a4a4" stroke-width="1.1" stroke-linecap="butt"/><path d="M536.51 571.07A37.7 37.7 0 0 1 534.37 573.21" fill="none" stroke="#a4a4a4" stroke-width="1.1" stroke-linecap="butt"/><line x1="488.11" y1="573.98" x2="482.94" y2="581.10" stroke="#b9b9b9" stroke-width="3.2" stroke-linecap="butt"/><line x1="475.32" y1="556.38" x2="466.95" y2="559.10" stroke="#b9b9b9" stroke-width="3.2" stroke-linecap="butt"/><line x1="475.32" y1="534.62" x2="466.95" y2="531.90" stroke="#b9b9b9" stroke-width="3.2" stroke-linecap="butt"/><line x1="488.11" y1="517.02" x2="482.94" y2="509.90" stroke="#b9b9b9" stroke-width="3.2" stroke-linecap="butt"/><line x1="529.49" y1="517.02" x2="534.66" y2="509.90" stroke="#b9b9b9" stroke-width="3.2" stroke-linecap="butt"/><line x1="542.28" y1="534.62" x2="550.65" y2="531.90" stroke="#b9b9b9" stroke-width="3.2" stroke-linecap="butt"/><line x1="542.28" y1="556.38" x2="550.65" y2="559.10" stroke="#b9b9b9" stroke-width="3.2" stroke-linecap="butt"/><line x1="529.49" y1="573.98" x2="534.66" y2="581.10" stroke="#b9b9b9" stroke-width="3.2" stroke-linecap="butt"/><circle cx="508.80" cy="541.70" r="24.4" fill="url(#capg)"/><circle cx="508.80" cy="517.80" r="1.3" fill="#0c0c0c"/><circle cx="525.70" cy="524.80" r="1.3" fill="#0c0c0c"/><circle cx="532.70" cy="541.70" r="1.3" fill="#0c0c0c"/><circle cx="525.70" cy="558.60" r="1.3" fill="#0c0c0c"/><circle cx="508.80" cy="565.60" r="1.3" fill="#0c0c0c"/><circle cx="491.90" cy="558.60" r="1.3" fill="#0c0c0c"/><circle cx="484.90" cy="541.70" r="1.3" fill="#0c0c0c"/><circle cx="491.90" cy="524.80" r="1.3" fill="#0c0c0c"/><circle cx="508.80" cy="542.30" r="18.9" fill="none" stroke="#000" stroke-opacity=".16" stroke-width="1.2"/><circle cx="508.80" cy="541.70" r="14.5" fill="url(#ringg)"/><circle cx="508.80" cy="541.70" r="11.25" fill="#000"/><circle cx="509.96" cy="519.53" r="3.7" fill="#a07830" opacity=".5"/><circle cx="509.96" cy="519.53" r="2.2" fill="#f79468"/>
<circle cx="611.20" cy="548.50" r="42.2" fill="url(#sh)"/><circle cx="611.20" cy="545.50" r="33.2" fill="url(#baseg)"/><path d="M585.63 573.21A37.7 37.7 0 0 1 583.49 571.07" fill="none" stroke="#a4a4a4" stroke-width="1.1" stroke-linecap="butt"/><path d="M581.61 568.87A37.7 37.7 0 0 1 579.84 566.42" fill="none" stroke="#a4a4a4" stroke-width="1.1" stroke-linecap="butt"/><path d="M578.32 563.95A37.7 37.7 0 0 1 576.95 561.25" fill="none" stroke="#a4a4a4" stroke-width="1.1" stroke-linecap="butt"/><path d="M574.23 552.89A37.7 37.7 0 0 1 573.76 549.90" fill="none" stroke="#a4a4a4" stroke-width="1.1" stroke-linecap="butt"/><path d="M573.53 547.01A37.7 37.7 0 0 1 573.53 543.99" fill="none" stroke="#a4a4a4" stroke-width="1.1" stroke-linecap="butt"/><path d="M573.76 541.10A37.7 37.7 0 0 1 574.23 538.11" fill="none" stroke="#a4a4a4" stroke-width="1.1" stroke-linecap="butt"/><path d="M576.95 529.75A37.7 37.7 0 0 1 578.32 527.05" fill="none" stroke="#a4a4a4" stroke-width="1.1" stroke-linecap="butt"/><path d="M579.84 524.58A37.7 37.7 0 0 1 581.61 522.13" fill="none" stroke="#a4a4a4" stroke-width="1.1" stroke-linecap="butt"/><path d="M583.49 519.93A37.7 37.7 0 0 1 585.63 517.79" fill="none" stroke="#a4a4a4" stroke-width="1.1" stroke-linecap="butt"/><path d="M592.75 512.62A37.7 37.7 0 0 1 595.45 511.25" fill="none" stroke="#a4a4a4" stroke-width="1.1" stroke-linecap="butt"/><path d="M598.12 510.14A37.7 37.7 0 0 1 601.00 509.21" fill="none" stroke="#a4a4a4" stroke-width="1.1" stroke-linecap="butt"/><path d="M603.81 508.53A37.7 37.7 0 0 1 606.80 508.06" fill="none" stroke="#a4a4a4" stroke-width="1.1" stroke-linecap="butt"/><path d="M615.60 508.06A37.7 37.7 0 0 1 618.59 508.53" fill="none" stroke="#a4a4a4" stroke-width="1.1" stroke-linecap="butt"/><path d="M621.40 509.21A37.7 37.7 0 0 1 624.28 510.14" fill="none" stroke="#a4a4a4" stroke-width="1.1" stroke-linecap="butt"/><path d="M626.95 511.25A37.7 37.7 0 0 1 629.65 512.62" fill="none" stroke="#a4a4a4" stroke-width="1.1" stroke-linecap="butt"/><path d="M636.77 517.79A37.7 37.7 0 0 1 638.91 519.93" fill="none" stroke="#a4a4a4" stroke-width="1.1" stroke-linecap="butt"/><path d="M640.79 522.13A37.7 37.7 0 0 1 642.56 524.58" fill="none" stroke="#a4a4a4" stroke-width="1.1" stroke-linecap="butt"/><path d="M644.08 527.05A37.7 37.7 0 0 1 645.45 529.75" fill="none" stroke="#a4a4a4" stroke-width="1.1" stroke-linecap="butt"/><path d="M648.17 538.11A37.7 37.7 0 0 1 648.64 541.10" fill="none" stroke="#a4a4a4" stroke-width="1.1" stroke-linecap="butt"/><path d="M648.87 543.99A37.7 37.7 0 0 1 648.87 547.01" fill="none" stroke="#a4a4a4" stroke-width="1.1" stroke-linecap="butt"/><path d="M648.64 549.90A37.7 37.7 0 0 1 648.17 552.89" fill="none" stroke="#a4a4a4" stroke-width="1.1" stroke-linecap="butt"/><path d="M645.45 561.25A37.7 37.7 0 0 1 644.08 563.95" fill="none" stroke="#a4a4a4" stroke-width="1.1" stroke-linecap="butt"/><path d="M642.56 566.42A37.7 37.7 0 0 1 640.79 568.87" fill="none" stroke="#a4a4a4" stroke-width="1.1" stroke-linecap="butt"/><path d="M638.91 571.07A37.7 37.7 0 0 1 636.77 573.21" fill="none" stroke="#a4a4a4" stroke-width="1.1" stroke-linecap="butt"/><line x1="590.51" y1="573.98" x2="585.34" y2="581.10" stroke="#b9b9b9" stroke-width="3.2" stroke-linecap="butt"/><line x1="577.72" y1="556.38" x2="569.35" y2="559.10" stroke="#b9b9b9" stroke-width="3.2" stroke-linecap="butt"/><line x1="577.72" y1="534.62" x2="569.35" y2="531.90" stroke="#b9b9b9" stroke-width="3.2" stroke-linecap="butt"/><line x1="590.51" y1="517.02" x2="585.34" y2="509.90" stroke="#b9b9b9" stroke-width="3.2" stroke-linecap="butt"/><line x1="631.89" y1="517.02" x2="637.06" y2="509.90" stroke="#b9b9b9" stroke-width="3.2" stroke-linecap="butt"/><line x1="644.68" y1="534.62" x2="653.05" y2="531.90" stroke="#b9b9b9" stroke-width="3.2" stroke-linecap="butt"/><line x1="644.68" y1="556.38" x2="653.05" y2="559.10" stroke="#b9b9b9" stroke-width="3.2" stroke-linecap="butt"/><line x1="631.89" y1="573.98" x2="637.06" y2="581.10" stroke="#b9b9b9" stroke-width="3.2" stroke-linecap="butt"/><circle cx="611.20" cy="541.70" r="24.4" fill="url(#capg)"/><circle cx="611.20" cy="517.80" r="1.3" fill="#0c0c0c"/><circle cx="628.10" cy="524.80" r="1.3" fill="#0c0c0c"/><circle cx="635.10" cy="541.70" r="1.3" fill="#0c0c0c"/><circle cx="628.10" cy="558.60" r="1.3" fill="#0c0c0c"/><circle cx="611.20" cy="565.60" r="1.3" fill="#0c0c0c"/><circle cx="594.30" cy="558.60" r="1.3" fill="#0c0c0c"/><circle cx="587.30" cy="541.70" r="1.3" fill="#0c0c0c"/><circle cx="594.30" cy="524.80" r="1.3" fill="#0c0c0c"/><circle cx="611.20" cy="542.30" r="18.9" fill="none" stroke="#000" stroke-opacity=".16" stroke-width="1.2"/><circle cx="611.20" cy="541.70" r="14.5" fill="url(#ringg)"/><circle cx="611.20" cy="541.70" r="11.25" fill="#000"/><circle cx="612.36" cy="519.53" r="3.7" fill="#a07830" opacity=".5"/><circle cx="612.36" cy="519.53" r="2.2" fill="#f79468"/>
<circle cx="732.40" cy="182.90" r="37" fill="url(#sh)"/><circle cx="732.40" cy="179.90" r="31" fill="url(#baseg)"/><path d="M705.21 200.14A34.5 34.5 0 0 1 699.24 188.41" fill="none" stroke="#d2d2d2" stroke-width="3.2" stroke-linecap="butt"/><path d="M697.91 178.30A34.5 34.5 0 0 1 700.64 165.42" fill="none" stroke="#d2d2d2" stroke-width="3.2" stroke-linecap="butt"/><path d="M705.97 156.72A34.5 34.5 0 0 1 716.20 148.44" fill="none" stroke="#d2d2d2" stroke-width="3.2" stroke-linecap="butt"/><path d="M725.82 145.03A34.5 34.5 0 0 1 738.98 145.03" fill="none" stroke="#d2d2d2" stroke-width="3.2" stroke-linecap="butt"/><path d="M748.60 148.44A34.5 34.5 0 0 1 758.83 156.72" fill="none" stroke="#d2d2d2" stroke-width="3.2" stroke-linecap="butt"/><path d="M764.16 165.42A34.5 34.5 0 0 1 766.89 178.30" fill="none" stroke="#d2d2d2" stroke-width="3.2" stroke-linecap="butt"/><path d="M765.56 188.41A34.5 34.5 0 0 1 759.59 200.14" fill="none" stroke="#d2d2d2" stroke-width="3.2" stroke-linecap="butt"/><line x1="709.75" y1="202.76" x2="707.41" y2="205.23" stroke="#c8c8c8" stroke-width="2.8" stroke-linecap="butt"/><line x1="699.78" y1="183.19" x2="696.41" y2="183.64" stroke="#c8c8c8" stroke-width="2.8" stroke-linecap="butt"/><line x1="704.35" y1="161.71" x2="701.45" y2="159.93" stroke="#c8c8c8" stroke-width="2.8" stroke-linecap="butt"/><line x1="721.42" y1="147.89" x2="720.28" y2="144.68" stroke="#c8c8c8" stroke-width="2.8" stroke-linecap="butt"/><line x1="743.38" y1="147.89" x2="744.52" y2="144.68" stroke="#c8c8c8" stroke-width="2.8" stroke-linecap="butt"/><line x1="760.45" y1="161.71" x2="763.35" y2="159.93" stroke="#c8c8c8" stroke-width="2.8" stroke-linecap="butt"/><line x1="765.02" y1="183.19" x2="768.39" y2="183.64" stroke="#c8c8c8" stroke-width="2.8" stroke-linecap="butt"/><line x1="755.05" y1="202.76" x2="757.39" y2="205.23" stroke="#c8c8c8" stroke-width="2.8" stroke-linecap="butt"/><circle cx="732.40" cy="176.70" r="28" fill="url(#capg)"/><circle cx="732.40" cy="177.30" r="22.5" fill="none" stroke="#000" stroke-opacity=".16" stroke-width="1.2"/><circle cx="732.40" cy="176.70" r="18" fill="#8d9696"/><circle cx="732.40" cy="176.70" r="16" fill="url(#teal)"/><circle cx="712.99" cy="163.11" r="3.4" fill="#c08030" opacity=".5"/><circle cx="712.99" cy="163.11" r="1.9" fill="#f4dca0"/>
<circle cx="732.40" cy="294.30" r="37" fill="url(#sh2)"/><circle cx="732.40" cy="288.80" r="26" fill="#151515"/><path d="M698.87 306.94A37 37 0 0 1 695.49 288.72" fill="none" stroke="#b9b9b9" stroke-width="3.5" stroke-linecap="round"/><path d="M704.90 266.54A37 37 0 0 1 720.35 256.32" fill="none" stroke="#b9b9b9" stroke-width="3.5" stroke-linecap="round"/><path d="M744.45 256.32A37 37 0 0 1 759.90 266.54" fill="none" stroke="#b9b9b9" stroke-width="3.5" stroke-linecap="round"/><path d="M769.31 288.72A37 37 0 0 1 765.93 306.94" fill="none" stroke="#b9b9b9" stroke-width="3.5" stroke-linecap="round"/><line x1="708.18" y1="315.02" x2="706.04" y2="317.12" stroke="#b0b0b0" stroke-width="3.0" stroke-linecap="butt"/><line x1="701.31" y1="277.78" x2="698.56" y2="276.59" stroke="#b0b0b0" stroke-width="3.0" stroke-linecap="butt"/><line x1="732.40" y1="257.40" x2="732.40" y2="254.40" stroke="#b0b0b0" stroke-width="3.0" stroke-linecap="butt"/><line x1="763.49" y1="277.78" x2="766.24" y2="276.59" stroke="#b0b0b0" stroke-width="3.0" stroke-linecap="butt"/><line x1="756.62" y1="315.02" x2="758.76" y2="317.12" stroke="#b0b0b0" stroke-width="3.0" stroke-linecap="butt"/><circle cx="743.12" cy="278.30" r="14.5" fill="url(#capg)"/><circle cx="732.40" cy="287.30" r="24.5" fill="url(#capg)"/><circle cx="732.40" cy="287.90" r="19.0" fill="none" stroke="#000" stroke-opacity=".16" stroke-width="1.2"/><circle cx="732.40" cy="287.30" r="18.5" fill="url(#ringg)"/><circle cx="732.40" cy="287.30" r="16" fill="#000"/><circle cx="714.29" cy="303.05" r="3.6" fill="#e06020" opacity=".5"/><circle cx="714.29" cy="303.05" r="2.1" fill="#f7a878"/>
<circle cx="732.40" cy="434.20" r="37" fill="url(#sh)"/><circle cx="732.40" cy="431.20" r="31" fill="url(#baseg)"/><path d="M705.21 451.44A34.5 34.5 0 0 1 699.24 439.71" fill="none" stroke="#a8a8a8" stroke-width="3.2" stroke-linecap="butt"/><path d="M697.91 429.60A34.5 34.5 0 0 1 700.64 416.72" fill="none" stroke="#a8a8a8" stroke-width="3.2" stroke-linecap="butt"/><path d="M705.97 408.02A34.5 34.5 0 0 1 716.20 399.74" fill="none" stroke="#a8a8a8" stroke-width="3.2" stroke-linecap="butt"/><path d="M725.82 396.33A34.5 34.5 0 0 1 738.98 396.33" fill="none" stroke="#a8a8a8" stroke-width="3.2" stroke-linecap="butt"/><path d="M748.60 399.74A34.5 34.5 0 0 1 758.83 408.02" fill="none" stroke="#a8a8a8" stroke-width="3.2" stroke-linecap="butt"/><path d="M764.16 416.72A34.5 34.5 0 0 1 766.89 429.60" fill="none" stroke="#a8a8a8" stroke-width="3.2" stroke-linecap="butt"/><path d="M765.56 439.71A34.5 34.5 0 0 1 759.59 451.44" fill="none" stroke="#a8a8a8" stroke-width="3.2" stroke-linecap="butt"/><line x1="709.75" y1="454.06" x2="707.41" y2="456.53" stroke="#a0a0a0" stroke-width="2.8" stroke-linecap="butt"/><line x1="699.78" y1="434.49" x2="696.41" y2="434.94" stroke="#a0a0a0" stroke-width="2.8" stroke-linecap="butt"/><line x1="704.35" y1="413.01" x2="701.45" y2="411.23" stroke="#a0a0a0" stroke-width="2.8" stroke-linecap="butt"/><line x1="721.42" y1="399.19" x2="720.28" y2="395.98" stroke="#a0a0a0" stroke-width="2.8" stroke-linecap="butt"/><line x1="743.38" y1="399.19" x2="744.52" y2="395.98" stroke="#a0a0a0" stroke-width="2.8" stroke-linecap="butt"/><line x1="760.45" y1="413.01" x2="763.35" y2="411.23" stroke="#a0a0a0" stroke-width="2.8" stroke-linecap="butt"/><line x1="765.02" y1="434.49" x2="768.39" y2="434.94" stroke="#a0a0a0" stroke-width="2.8" stroke-linecap="butt"/><line x1="755.05" y1="454.06" x2="757.39" y2="456.53" stroke="#a0a0a0" stroke-width="2.8" stroke-linecap="butt"/><circle cx="732.40" cy="428.00" r="28" fill="url(#capr)"/><circle cx="732.40" cy="428.60" r="22.5" fill="none" stroke="#000" stroke-opacity=".16" stroke-width="1.2"/><circle cx="732.40" cy="428.00" r="18" fill="#7a4548"/><circle cx="732.40" cy="428.00" r="16" fill="url(#red)"/><circle cx="744.89" cy="407.86" r="3.4" fill="#c06030" opacity=".5"/><circle cx="744.89" cy="407.86" r="1.9" fill="#f4c090"/>
<circle cx="732.40" cy="545.60" r="37" fill="url(#sh2)"/><circle cx="732.40" cy="540.10" r="26" fill="#151515"/><path d="M698.87 558.24A37 37 0 0 1 695.49 540.02" fill="none" stroke="#8e8e8e" stroke-width="3.5" stroke-linecap="round"/><path d="M704.90 517.84A37 37 0 0 1 720.35 507.62" fill="none" stroke="#8e8e8e" stroke-width="3.5" stroke-linecap="round"/><path d="M744.45 507.62A37 37 0 0 1 759.90 517.84" fill="none" stroke="#8e8e8e" stroke-width="3.5" stroke-linecap="round"/><path d="M769.31 540.02A37 37 0 0 1 765.93 558.24" fill="none" stroke="#8e8e8e" stroke-width="3.5" stroke-linecap="round"/><line x1="708.18" y1="566.32" x2="706.04" y2="568.42" stroke="#8a8a8a" stroke-width="3.0" stroke-linecap="butt"/><line x1="701.31" y1="529.08" x2="698.56" y2="527.89" stroke="#8a8a8a" stroke-width="3.0" stroke-linecap="butt"/><line x1="732.40" y1="508.70" x2="732.40" y2="505.70" stroke="#8a8a8a" stroke-width="3.0" stroke-linecap="butt"/><line x1="763.49" y1="529.08" x2="766.24" y2="527.89" stroke="#8a8a8a" stroke-width="3.0" stroke-linecap="butt"/><line x1="756.62" y1="566.32" x2="758.76" y2="568.42" stroke="#8a8a8a" stroke-width="3.0" stroke-linecap="butt"/><circle cx="743.12" cy="529.60" r="14.5" fill="url(#capg)"/><circle cx="732.40" cy="538.60" r="24.5" fill="url(#capg)"/><circle cx="732.40" cy="539.20" r="19.0" fill="none" stroke="#000" stroke-opacity=".16" stroke-width="1.2"/><circle cx="732.40" cy="538.60" r="18.5" fill="url(#ringg)"/><circle cx="732.40" cy="538.60" r="16" fill="#000"/><circle cx="714.29" cy="554.35" r="3.6" fill="#e06020" opacity=".5"/><circle cx="714.29" cy="554.35" r="2.1" fill="#f7a878"/>
<rect x="255.10" y="676.3" width="1" height="19.4" fill="#6c6c6c"/><rect x="260.27" y="681.3" width="1" height="9.8" fill="#5c5c5c"/><rect x="265.43" y="681.3" width="1" height="9.8" fill="#5c5c5c"/><rect x="270.60" y="681.3" width="1" height="9.8" fill="#5c5c5c"/><rect x="275.77" y="681.3" width="1" height="9.8" fill="#5c5c5c"/><rect x="280.94" y="681.3" width="1" height="9.8" fill="#5c5c5c"/><rect x="286.10" y="681.3" width="1" height="9.8" fill="#5c5c5c"/><rect x="291.27" y="681.3" width="1" height="9.8" fill="#5c5c5c"/><rect x="296.44" y="681.3" width="1" height="9.8" fill="#5c5c5c"/><rect x="301.60" y="681.3" width="1" height="9.8" fill="#5c5c5c"/><rect x="306.77" y="676.3" width="1" height="19.4" fill="#6c6c6c"/><rect x="311.94" y="681.3" width="1" height="9.8" fill="#5c5c5c"/><rect x="317.10" y="681.3" width="1" height="9.8" fill="#5c5c5c"/><rect x="322.27" y="681.3" width="1" height="9.8" fill="#5c5c5c"/><rect x="327.44" y="681.3" width="1" height="9.8" fill="#5c5c5c"/><rect x="332.61" y="681.3" width="1" height="9.8" fill="#5c5c5c"/><rect x="337.77" y="681.3" width="1" height="9.8" fill="#5c5c5c"/><rect x="342.94" y="681.3" width="1" height="9.8" fill="#5c5c5c"/><rect x="348.11" y="681.3" width="1" height="9.8" fill="#5c5c5c"/><rect x="353.27" y="681.3" width="1" height="9.8" fill="#5c5c5c"/><rect x="358.44" y="676.3" width="1" height="19.4" fill="#6c6c6c"/><rect x="363.61" y="681.3" width="1" height="9.8" fill="#5c5c5c"/><rect x="368.77" y="681.3" width="1" height="9.8" fill="#5c5c5c"/><rect x="373.94" y="681.3" width="1" height="9.8" fill="#5c5c5c"/><rect x="379.11" y="681.3" width="1" height="9.8" fill="#5c5c5c"/><rect x="384.27" y="681.3" width="1" height="9.8" fill="#5c5c5c"/><rect x="389.44" y="681.3" width="1" height="9.8" fill="#5c5c5c"/><rect x="394.61" y="681.3" width="1" height="9.8" fill="#5c5c5c"/><rect x="425.61" y="681.3" width="1" height="9.8" fill="#5c5c5c"/><rect x="430.78" y="681.3" width="1" height="9.8" fill="#5c5c5c"/><rect x="435.94" y="681.3" width="1" height="9.8" fill="#5c5c5c"/><rect x="441.11" y="681.3" width="1" height="9.8" fill="#5c5c5c"/><rect x="446.28" y="681.3" width="1" height="9.8" fill="#5c5c5c"/><rect x="451.45" y="681.3" width="1" height="9.8" fill="#5c5c5c"/><rect x="456.61" y="681.3" width="1" height="9.8" fill="#5c5c5c"/><rect x="461.78" y="676.3" width="1" height="19.4" fill="#6c6c6c"/><rect x="466.95" y="681.3" width="1" height="9.8" fill="#5c5c5c"/><rect x="472.11" y="681.3" width="1" height="9.8" fill="#5c5c5c"/><rect x="477.28" y="681.3" width="1" height="9.8" fill="#5c5c5c"/><rect x="482.45" y="681.3" width="1" height="9.8" fill="#5c5c5c"/><rect x="487.62" y="681.3" width="1" height="9.8" fill="#5c5c5c"/><rect x="492.78" y="681.3" width="1" height="9.8" fill="#5c5c5c"/><rect x="497.95" y="681.3" width="1" height="9.8" fill="#5c5c5c"/><rect x="503.12" y="681.3" width="1" height="9.8" fill="#5c5c5c"/><rect x="508.28" y="681.3" width="1" height="9.8" fill="#5c5c5c"/><rect x="513.45" y="676.3" width="1" height="19.4" fill="#6c6c6c"/><rect x="518.62" y="681.3" width="1" height="9.8" fill="#5c5c5c"/><rect x="523.78" y="681.3" width="1" height="9.8" fill="#5c5c5c"/><rect x="528.95" y="681.3" width="1" height="9.8" fill="#5c5c5c"/><rect x="534.12" y="681.3" width="1" height="9.8" fill="#5c5c5c"/><rect x="539.28" y="681.3" width="1" height="9.8" fill="#5c5c5c"/><rect x="544.45" y="681.3" width="1" height="9.8" fill="#5c5c5c"/><rect x="549.62" y="681.3" width="1" height="9.8" fill="#5c5c5c"/><rect x="554.79" y="681.3" width="1" height="9.8" fill="#5c5c5c"/><rect x="559.95" y="681.3" width="1" height="9.8" fill="#5c5c5c"/><rect x="565.12" y="676.3" width="1" height="19.4" fill="#6c6c6c"/>
<circle cx="648.30" cy="672.50" r="37.75" fill="url(#sh)"/><circle cx="648.30" cy="669.50" r="32.75" fill="url(#baseg)"/><path d="M623.82 696.03A36.1 36.1 0 0 1 621.77 693.98" fill="none" stroke="#c4c4c4" stroke-width="2.6" stroke-linecap="butt"/><path d="M619.97 691.87A36.1 36.1 0 0 1 618.27 689.53" fill="none" stroke="#c4c4c4" stroke-width="2.6" stroke-linecap="butt"/><path d="M616.82 687.17A36.1 36.1 0 0 1 615.50 684.59" fill="none" stroke="#c4c4c4" stroke-width="2.6" stroke-linecap="butt"/><path d="M612.90 676.57A36.1 36.1 0 0 1 612.45 673.71" fill="none" stroke="#c4c4c4" stroke-width="2.6" stroke-linecap="butt"/><path d="M612.23 670.95A36.1 36.1 0 0 1 612.23 668.05" fill="none" stroke="#c4c4c4" stroke-width="2.6" stroke-linecap="butt"/><path d="M612.45 665.29A36.1 36.1 0 0 1 612.90 662.43" fill="none" stroke="#c4c4c4" stroke-width="2.6" stroke-linecap="butt"/><path d="M615.50 654.41A36.1 36.1 0 0 1 616.82 651.83" fill="none" stroke="#c4c4c4" stroke-width="2.6" stroke-linecap="butt"/><path d="M618.27 649.47A36.1 36.1 0 0 1 619.97 647.13" fill="none" stroke="#c4c4c4" stroke-width="2.6" stroke-linecap="butt"/><path d="M621.77 645.02A36.1 36.1 0 0 1 623.82 642.97" fill="none" stroke="#c4c4c4" stroke-width="2.6" stroke-linecap="butt"/><path d="M630.63 638.02A36.1 36.1 0 0 1 633.21 636.70" fill="none" stroke="#c4c4c4" stroke-width="2.6" stroke-linecap="butt"/><path d="M635.78 635.64A36.1 36.1 0 0 1 638.53 634.75" fill="none" stroke="#c4c4c4" stroke-width="2.6" stroke-linecap="butt"/><path d="M641.23 634.10A36.1 36.1 0 0 1 644.09 633.65" fill="none" stroke="#c4c4c4" stroke-width="2.6" stroke-linecap="butt"/><path d="M652.51 633.65A36.1 36.1 0 0 1 655.37 634.10" fill="none" stroke="#c4c4c4" stroke-width="2.6" stroke-linecap="butt"/><path d="M658.07 634.75A36.1 36.1 0 0 1 660.82 635.64" fill="none" stroke="#c4c4c4" stroke-width="2.6" stroke-linecap="butt"/><path d="M663.39 636.70A36.1 36.1 0 0 1 665.97 638.02" fill="none" stroke="#c4c4c4" stroke-width="2.6" stroke-linecap="butt"/><path d="M672.78 642.97A36.1 36.1 0 0 1 674.83 645.02" fill="none" stroke="#c4c4c4" stroke-width="2.6" stroke-linecap="butt"/><path d="M676.63 647.13A36.1 36.1 0 0 1 678.33 649.47" fill="none" stroke="#c4c4c4" stroke-width="2.6" stroke-linecap="butt"/><path d="M679.78 651.83A36.1 36.1 0 0 1 681.10 654.41" fill="none" stroke="#c4c4c4" stroke-width="2.6" stroke-linecap="butt"/><path d="M683.70 662.43A36.1 36.1 0 0 1 684.15 665.29" fill="none" stroke="#c4c4c4" stroke-width="2.6" stroke-linecap="butt"/><path d="M684.37 668.05A36.1 36.1 0 0 1 684.37 670.95" fill="none" stroke="#c4c4c4" stroke-width="2.6" stroke-linecap="butt"/><path d="M684.15 673.71A36.1 36.1 0 0 1 683.70 676.57" fill="none" stroke="#c4c4c4" stroke-width="2.6" stroke-linecap="butt"/><path d="M681.10 684.59A36.1 36.1 0 0 1 679.78 687.17" fill="none" stroke="#c4c4c4" stroke-width="2.6" stroke-linecap="butt"/><path d="M678.33 689.53A36.1 36.1 0 0 1 676.63 691.87" fill="none" stroke="#c4c4c4" stroke-width="2.6" stroke-linecap="butt"/><path d="M674.83 693.98A36.1 36.1 0 0 1 672.78 696.03" fill="none" stroke="#c4c4c4" stroke-width="2.6" stroke-linecap="butt"/><line x1="627.73" y1="697.82" x2="622.32" y2="705.26" stroke="#bdbdbd" stroke-width="3.5" stroke-linecap="butt"/><line x1="615.01" y1="680.32" x2="606.26" y2="683.16" stroke="#bdbdbd" stroke-width="3.5" stroke-linecap="butt"/><line x1="615.01" y1="658.68" x2="606.26" y2="655.84" stroke="#bdbdbd" stroke-width="3.5" stroke-linecap="butt"/><line x1="627.73" y1="641.18" x2="622.32" y2="633.74" stroke="#bdbdbd" stroke-width="3.5" stroke-linecap="butt"/><line x1="648.30" y1="634.50" x2="648.30" y2="625.30" stroke="#bdbdbd" stroke-width="3.5" stroke-linecap="butt"/><line x1="668.87" y1="641.18" x2="674.28" y2="633.74" stroke="#bdbdbd" stroke-width="3.5" stroke-linecap="butt"/><line x1="681.59" y1="658.68" x2="690.34" y2="655.84" stroke="#bdbdbd" stroke-width="3.5" stroke-linecap="butt"/><line x1="681.59" y1="680.32" x2="690.34" y2="683.16" stroke="#bdbdbd" stroke-width="3.5" stroke-linecap="butt"/><line x1="668.87" y1="697.82" x2="674.28" y2="705.26" stroke="#bdbdbd" stroke-width="3.5" stroke-linecap="butt"/><circle cx="648.30" cy="665.00" r="24" fill="url(#capd)"/><circle cx="648.30" cy="641.50" r="1.3" fill="#101010"/><circle cx="664.92" cy="648.38" r="1.3" fill="#101010"/><circle cx="671.80" cy="665.00" r="1.3" fill="#101010"/><circle cx="664.92" cy="681.62" r="1.3" fill="#101010"/><circle cx="648.30" cy="688.50" r="1.3" fill="#101010"/><circle cx="631.68" cy="681.62" r="1.3" fill="#101010"/><circle cx="624.80" cy="665.00" r="1.3" fill="#101010"/><circle cx="631.68" cy="648.38" r="1.3" fill="#101010"/><circle cx="648.30" cy="665.60" r="18.5" fill="none" stroke="#000" stroke-opacity=".16" stroke-width="1.2"/><circle cx="648.30" cy="665.60" r="14.4" fill="#4a4844"/><line x1="654.02" y1="671.20" x2="663.95" y2="680.92" stroke="#f0624c" stroke-width="4" stroke-linecap="butt"/><circle cx="648.30" cy="665.60" r="11.65" fill="#f0624c"/>
<rect x="867.00" y="676.3" width="1" height="19.4" fill="#6c6c6c"/><rect x="872.15" y="681.3" width="1" height="9.8" fill="#5c5c5c"/><rect x="877.30" y="681.3" width="1" height="9.8" fill="#5c5c5c"/><rect x="882.45" y="681.3" width="1" height="9.8" fill="#5c5c5c"/><rect x="887.60" y="681.3" width="1" height="9.8" fill="#5c5c5c"/><rect x="892.75" y="681.3" width="1" height="9.8" fill="#5c5c5c"/><rect x="897.90" y="681.3" width="1" height="9.8" fill="#5c5c5c"/><rect x="903.05" y="681.3" width="1" height="9.8" fill="#5c5c5c"/><rect x="908.20" y="681.3" width="1" height="9.8" fill="#5c5c5c"/><rect x="913.35" y="681.3" width="1" height="9.8" fill="#5c5c5c"/><rect x="918.50" y="676.3" width="1" height="19.4" fill="#6c6c6c"/><rect x="923.65" y="681.3" width="1" height="9.8" fill="#5c5c5c"/><rect x="928.80" y="681.3" width="1" height="9.8" fill="#5c5c5c"/><rect x="933.95" y="681.3" width="1" height="9.8" fill="#5c5c5c"/><rect x="939.10" y="681.3" width="1" height="9.8" fill="#5c5c5c"/><rect x="944.25" y="681.3" width="1" height="9.8" fill="#5c5c5c"/><rect x="949.40" y="681.3" width="1" height="9.8" fill="#5c5c5c"/><rect x="954.55" y="681.3" width="1" height="9.8" fill="#5c5c5c"/><rect x="959.70" y="681.3" width="1" height="9.8" fill="#5c5c5c"/><rect x="964.85" y="681.3" width="1" height="9.8" fill="#5c5c5c"/><rect x="970.00" y="676.3" width="1" height="19.4" fill="#6c6c6c"/><rect x="975.15" y="681.3" width="1" height="9.8" fill="#5c5c5c"/><rect x="980.30" y="681.3" width="1" height="9.8" fill="#5c5c5c"/><rect x="985.45" y="681.3" width="1" height="9.8" fill="#5c5c5c"/><rect x="990.60" y="681.3" width="1" height="9.8" fill="#5c5c5c"/><rect x="995.75" y="681.3" width="1" height="9.8" fill="#5c5c5c"/><rect x="1000.90" y="681.3" width="1" height="9.8" fill="#5c5c5c"/><rect x="1006.05" y="681.3" width="1" height="9.8" fill="#5c5c5c"/><rect x="1036.95" y="681.3" width="1" height="9.8" fill="#5c5c5c"/><rect x="1042.10" y="681.3" width="1" height="9.8" fill="#5c5c5c"/><rect x="1047.25" y="681.3" width="1" height="9.8" fill="#5c5c5c"/><rect x="1052.40" y="681.3" width="1" height="9.8" fill="#5c5c5c"/><rect x="1057.55" y="681.3" width="1" height="9.8" fill="#5c5c5c"/><rect x="1062.70" y="681.3" width="1" height="9.8" fill="#5c5c5c"/><rect x="1067.85" y="681.3" width="1" height="9.8" fill="#5c5c5c"/><rect x="1073.00" y="676.3" width="1" height="19.4" fill="#6c6c6c"/><rect x="1078.15" y="681.3" width="1" height="9.8" fill="#5c5c5c"/><rect x="1083.30" y="681.3" width="1" height="9.8" fill="#5c5c5c"/><rect x="1088.45" y="681.3" width="1" height="9.8" fill="#5c5c5c"/><rect x="1093.60" y="681.3" width="1" height="9.8" fill="#5c5c5c"/><rect x="1098.75" y="681.3" width="1" height="9.8" fill="#5c5c5c"/><rect x="1103.90" y="681.3" width="1" height="9.8" fill="#5c5c5c"/><rect x="1109.05" y="681.3" width="1" height="9.8" fill="#5c5c5c"/><rect x="1114.20" y="681.3" width="1" height="9.8" fill="#5c5c5c"/><rect x="1119.35" y="681.3" width="1" height="9.8" fill="#5c5c5c"/><rect x="1124.50" y="676.3" width="1" height="19.4" fill="#6c6c6c"/><rect x="1129.65" y="681.3" width="1" height="9.8" fill="#5c5c5c"/><rect x="1134.80" y="681.3" width="1" height="9.8" fill="#5c5c5c"/><rect x="1139.95" y="681.3" width="1" height="9.8" fill="#5c5c5c"/><rect x="1145.10" y="681.3" width="1" height="9.8" fill="#5c5c5c"/><rect x="1150.25" y="681.3" width="1" height="9.8" fill="#5c5c5c"/><rect x="1155.40" y="681.3" width="1" height="9.8" fill="#5c5c5c"/><rect x="1160.55" y="681.3" width="1" height="9.8" fill="#5c5c5c"/><rect x="1165.70" y="681.3" width="1" height="9.8" fill="#5c5c5c"/><rect x="1170.85" y="681.3" width="1" height="9.8" fill="#5c5c5c"/><rect x="1176.00" y="676.3" width="1" height="19.4" fill="#6c6c6c"/>
<circle cx="787.60" cy="672.50" r="37.75" fill="url(#sh)"/><circle cx="787.60" cy="669.50" r="32.75" fill="url(#baseg)"/><path d="M763.12 696.03A36.1 36.1 0 0 1 761.07 693.98" fill="none" stroke="#c4c4c4" stroke-width="2.6" stroke-linecap="butt"/><path d="M759.27 691.87A36.1 36.1 0 0 1 757.57 689.53" fill="none" stroke="#c4c4c4" stroke-width="2.6" stroke-linecap="butt"/><path d="M756.12 687.17A36.1 36.1 0 0 1 754.80 684.59" fill="none" stroke="#c4c4c4" stroke-width="2.6" stroke-linecap="butt"/><path d="M752.20 676.57A36.1 36.1 0 0 1 751.75 673.71" fill="none" stroke="#c4c4c4" stroke-width="2.6" stroke-linecap="butt"/><path d="M751.53 670.95A36.1 36.1 0 0 1 751.53 668.05" fill="none" stroke="#c4c4c4" stroke-width="2.6" stroke-linecap="butt"/><path d="M751.75 665.29A36.1 36.1 0 0 1 752.20 662.43" fill="none" stroke="#c4c4c4" stroke-width="2.6" stroke-linecap="butt"/><path d="M754.80 654.41A36.1 36.1 0 0 1 756.12 651.83" fill="none" stroke="#c4c4c4" stroke-width="2.6" stroke-linecap="butt"/><path d="M757.57 649.47A36.1 36.1 0 0 1 759.27 647.13" fill="none" stroke="#c4c4c4" stroke-width="2.6" stroke-linecap="butt"/><path d="M761.07 645.02A36.1 36.1 0 0 1 763.12 642.97" fill="none" stroke="#c4c4c4" stroke-width="2.6" stroke-linecap="butt"/><path d="M769.93 638.02A36.1 36.1 0 0 1 772.51 636.70" fill="none" stroke="#c4c4c4" stroke-width="2.6" stroke-linecap="butt"/><path d="M775.08 635.64A36.1 36.1 0 0 1 777.83 634.75" fill="none" stroke="#c4c4c4" stroke-width="2.6" stroke-linecap="butt"/><path d="M780.53 634.10A36.1 36.1 0 0 1 783.39 633.65" fill="none" stroke="#c4c4c4" stroke-width="2.6" stroke-linecap="butt"/><path d="M791.81 633.65A36.1 36.1 0 0 1 794.67 634.10" fill="none" stroke="#c4c4c4" stroke-width="2.6" stroke-linecap="butt"/><path d="M797.37 634.75A36.1 36.1 0 0 1 800.12 635.64" fill="none" stroke="#c4c4c4" stroke-width="2.6" stroke-linecap="butt"/><path d="M802.69 636.70A36.1 36.1 0 0 1 805.27 638.02" fill="none" stroke="#c4c4c4" stroke-width="2.6" stroke-linecap="butt"/><path d="M812.08 642.97A36.1 36.1 0 0 1 814.13 645.02" fill="none" stroke="#c4c4c4" stroke-width="2.6" stroke-linecap="butt"/><path d="M815.93 647.13A36.1 36.1 0 0 1 817.63 649.47" fill="none" stroke="#c4c4c4" stroke-width="2.6" stroke-linecap="butt"/><path d="M819.08 651.83A36.1 36.1 0 0 1 820.40 654.41" fill="none" stroke="#c4c4c4" stroke-width="2.6" stroke-linecap="butt"/><path d="M823.00 662.43A36.1 36.1 0 0 1 823.45 665.29" fill="none" stroke="#c4c4c4" stroke-width="2.6" stroke-linecap="butt"/><path d="M823.67 668.05A36.1 36.1 0 0 1 823.67 670.95" fill="none" stroke="#c4c4c4" stroke-width="2.6" stroke-linecap="butt"/><path d="M823.45 673.71A36.1 36.1 0 0 1 823.00 676.57" fill="none" stroke="#c4c4c4" stroke-width="2.6" stroke-linecap="butt"/><path d="M820.40 684.59A36.1 36.1 0 0 1 819.08 687.17" fill="none" stroke="#c4c4c4" stroke-width="2.6" stroke-linecap="butt"/><path d="M817.63 689.53A36.1 36.1 0 0 1 815.93 691.87" fill="none" stroke="#c4c4c4" stroke-width="2.6" stroke-linecap="butt"/><path d="M814.13 693.98A36.1 36.1 0 0 1 812.08 696.03" fill="none" stroke="#c4c4c4" stroke-width="2.6" stroke-linecap="butt"/><line x1="767.03" y1="697.82" x2="761.62" y2="705.26" stroke="#bdbdbd" stroke-width="3.5" stroke-linecap="butt"/><line x1="754.31" y1="680.32" x2="745.56" y2="683.16" stroke="#bdbdbd" stroke-width="3.5" stroke-linecap="butt"/><line x1="754.31" y1="658.68" x2="745.56" y2="655.84" stroke="#bdbdbd" stroke-width="3.5" stroke-linecap="butt"/><line x1="767.03" y1="641.18" x2="761.62" y2="633.74" stroke="#bdbdbd" stroke-width="3.5" stroke-linecap="butt"/><line x1="787.60" y1="634.50" x2="787.60" y2="625.30" stroke="#bdbdbd" stroke-width="3.5" stroke-linecap="butt"/><line x1="808.17" y1="641.18" x2="813.58" y2="633.74" stroke="#bdbdbd" stroke-width="3.5" stroke-linecap="butt"/><line x1="820.89" y1="658.68" x2="829.64" y2="655.84" stroke="#bdbdbd" stroke-width="3.5" stroke-linecap="butt"/><line x1="820.89" y1="680.32" x2="829.64" y2="683.16" stroke="#bdbdbd" stroke-width="3.5" stroke-linecap="butt"/><line x1="808.17" y1="697.82" x2="813.58" y2="705.26" stroke="#bdbdbd" stroke-width="3.5" stroke-linecap="butt"/><circle cx="787.60" cy="665.00" r="24" fill="url(#capd)"/><circle cx="787.60" cy="641.50" r="1.3" fill="#101010"/><circle cx="804.22" cy="648.38" r="1.3" fill="#101010"/><circle cx="811.10" cy="665.00" r="1.3" fill="#101010"/><circle cx="804.22" cy="681.62" r="1.3" fill="#101010"/><circle cx="787.60" cy="688.50" r="1.3" fill="#101010"/><circle cx="770.98" cy="681.62" r="1.3" fill="#101010"/><circle cx="764.10" cy="665.00" r="1.3" fill="#101010"/><circle cx="770.98" cy="648.38" r="1.3" fill="#101010"/><circle cx="787.60" cy="665.60" r="18.5" fill="none" stroke="#000" stroke-opacity=".16" stroke-width="1.2"/><circle cx="787.60" cy="665.60" r="14.4" fill="#4a4844"/><line x1="793.32" y1="671.20" x2="803.25" y2="680.92" stroke="#f0624c" stroke-width="4" stroke-linecap="butt"/><circle cx="787.60" cy="665.60" r="11.65" fill="#f0624c"/>
</svg>
<div class="t " style="left:431.00px;top:81.75px;font-size:9.8px;line-height:9.8px;color:#e4e4e4;font-weight:400;-webkit-text-stroke:.45px #e4e4e4;letter-spacing:0.193px;">MIDI MAP</div>
<div class="t " style="left:521.00px;top:81.75px;font-size:9.8px;line-height:9.8px;color:#e4e4e4;font-weight:400;-webkit-text-stroke:.45px #e4e4e4;transform:scaleX(0.9642);transform-origin:0 0;">BROWSE</div>
<div class="t " style="left:754.50px;top:81.75px;font-size:9.8px;line-height:9.8px;color:#e4e4e4;font-weight:400;-webkit-text-stroke:.45px #e4e4e4;letter-spacing:-0.143px;">WRITE</div>
<div class="t " style="left:826.00px;top:81.75px;font-size:9.8px;line-height:9.8px;color:#e4e4e4;font-weight:400;-webkit-text-stroke:.45px #e4e4e4;letter-spacing:-0.022px;">TEMPO SYNC</div>
<div class="t " style="left:925.90px;top:81.75px;font-size:9.8px;line-height:9.8px;color:#e4e4e4;font-weight:400;-webkit-text-stroke:.45px #e4e4e4;letter-spacing:-0.120px;">PAD ENGAGE</div>
<div class="t " style="left:1032.65px;top:81.75px;font-size:9.8px;line-height:9.8px;color:#e4e4e4;font-weight:400;-webkit-text-stroke:.45px #e4e4e4;letter-spacing:-0.019px;">PAD LOCK</div>
<div class="t " style="left:1125.20px;top:81.75px;font-size:9.8px;line-height:9.8px;color:#e4e4e4;font-weight:400;-webkit-text-stroke:.45px #e4e4e4;letter-spacing:-0.136px;">INFO</div>
<div class="t lcd" style="left:580.70px;top:80.85px;font-size:11.6px;line-height:11.6px;color:#fcd0a0;font-weight:400;transform:scaleX(0.7901);transform-origin:0 0;">INIT</div>
<div class="t " style="left:261.30px;top:80.05px;font-size:14.2px;line-height:14.2px;color:#f4f4f4;transform:scaleX(0.8658);transform-origin:0 0;">SF-1 | STEREO FILTER</div>
<div class="t " style="left:260.50px;top:107.90px;font-size:9.5px;line-height:9.5px;color:#1fcadb;letter-spacing:0.187px;">ROUTE</div>
<div class="t " style="left:258.85px;top:248.90px;font-size:9.5px;line-height:9.5px;color:#1fcadb;letter-spacing:-0.051px;">LEVELS</div>
<div class="t " style="left:482.00px;top:107.90px;font-size:9.5px;line-height:9.5px;color:#1fcadb;letter-spacing:0.044px;">FILTER A</div>
<div class="t " style="left:482.00px;top:358.90px;font-size:9.5px;line-height:9.5px;color:#1fcadb;letter-spacing:-0.006px;">FILTER B</div>
<div class="t " style="left:717.50px;top:107.90px;font-size:9.5px;line-height:9.5px;color:#1fcadb;letter-spacing:0.214px;">LFO A</div>
<div class="t " style="left:717.50px;top:358.90px;font-size:9.5px;line-height:9.5px;color:#1fcadb;letter-spacing:0.126px;">LFO B</div>
<div class="t " style="left:962.00px;top:107.90px;font-size:9.5px;line-height:9.5px;color:#1fcadb;letter-spacing:0.316px;">TOUCH CONTROL</div>
<div class="t " style="left:255.00px;top:129.85px;font-size:8.6px;line-height:8.6px;color:#c2c2c2;letter-spacing:-0.175px;">PARALLEL</div>
<div class="t " style="left:226.75px;top:213.90px;font-size:8.5px;line-height:8.5px;color:#c2c2c2;letter-spacing:-0.134px;">SERIAL</div>
<div class="t " style="left:305.75px;top:213.90px;font-size:8.5px;line-height:8.5px;color:#c2c2c2;">L/R</div>
<div class="t " style="left:258.50px;top:226.65px;font-size:10px;line-height:10px;color:#c2c2c2;letter-spacing:0.700px;">ROUTE</div>
<div class="t " style="left:260.55px;top:367.65px;font-size:10px;line-height:10px;color:#c2c2c2;letter-spacing:0.875px;">INPUT</div>
<div class="t " style="left:228.62px;top:354.85px;font-size:8.6px;line-height:8.6px;color:#c2c2c2;">MIN</div>
<div class="t " style="left:309.44px;top:354.85px;font-size:8.6px;line-height:8.6px;color:#c2c2c2;">MAX</div>
<div class="t " style="left:260.00px;top:477.65px;font-size:10px;line-height:10px;color:#c2c2c2;letter-spacing:1.009px;">DRIVE</div>
<div class="t " style="left:240.11px;top:464.85px;font-size:8.6px;line-height:8.6px;color:#c2c2c2;">0</div>
<div class="t " style="left:310.11px;top:464.85px;font-size:8.6px;line-height:8.6px;color:#c2c2c2;">1</div>
<div class="t " style="left:254.10px;top:588.65px;font-size:10px;line-height:10px;color:#c2c2c2;letter-spacing:1.058px;">OUTPUT</div>
<div class="t " style="left:228.62px;top:575.85px;font-size:8.6px;line-height:8.6px;color:#c2c2c2;">MIN</div>
<div class="t " style="left:309.44px;top:575.85px;font-size:8.6px;line-height:8.6px;color:#c2c2c2;">MAX</div>
<div class="t " style="left:373.85px;top:224.85px;font-size:9.6px;line-height:9.6px;color:#c2c2c2;letter-spacing:0.901px;">CUTOFF A</div>
<div class="t " style="left:359.82px;top:211.85px;font-size:8.6px;line-height:8.6px;color:#d2d2d2;">20</div>
<div class="t " style="left:433.03px;top:211.85px;font-size:8.6px;line-height:8.6px;color:#d2d2d2;">20k</div>
<div class="t " style="left:489.30px;top:214.85px;font-size:9.6px;line-height:9.6px;color:#c2c2c2;letter-spacing:0.151px;">MODE A</div>
<div class="t " style="left:470.39px;top:203.65px;font-size:8px;line-height:8px;color:#d2d2d2;">LP</div>
<div class="t " style="left:536.82px;top:203.65px;font-size:8px;line-height:8px;color:#d2d2d2;">BP2</div>
<div class="t " style="left:503.04px;top:128.65px;font-size:8px;line-height:8px;color:#d2d2d2;">HP</div>
<div class="t " style="left:570.50px;top:214.85px;font-size:9.6px;line-height:9.6px;color:#c2c2c2;letter-spacing:0.193px;">LFO B &gt; CUTOFF</div>
<div class="t " style="left:576.44px;top:203.65px;font-size:8px;line-height:8px;color:#d2d2d2;">-1</div>
<div class="t " style="left:639.84px;top:203.65px;font-size:8px;line-height:8px;color:#d2d2d2;">+1</div>
<div class="t " style="left:609.18px;top:128.65px;font-size:8px;line-height:8px;color:#d2d2d2;">0</div>
<div class="t " style="left:362.55px;top:331.85px;font-size:9.6px;line-height:9.6px;color:#c2c2c2;letter-spacing:0.691px;">RESONANCE A</div>
<div class="t " style="left:364.86px;top:319.95px;font-size:8.4px;line-height:8.4px;color:#d2d2d2;">0</div>
<div class="t " style="left:432.16px;top:319.95px;font-size:8.4px;line-height:8.4px;color:#d2d2d2;">1</div>
<div class="t " style="left:468.10px;top:332.85px;font-size:9.6px;line-height:9.6px;color:#c2c2c2;letter-spacing:0.248px;">LFO A &gt; CUTOFF</div>
<div class="t " style="left:473.94px;top:321.65px;font-size:8px;line-height:8px;color:#d2d2d2;">-1</div>
<div class="t " style="left:537.24px;top:321.65px;font-size:8px;line-height:8px;color:#d2d2d2;">+1</div>
<div class="t " style="left:506.58px;top:246.65px;font-size:8px;line-height:8px;color:#d2d2d2;">0</div>
<div class="t " style="left:575.00px;top:332.85px;font-size:9.6px;line-height:9.6px;color:#c2c2c2;letter-spacing:0.233px;">ENV &gt; CUTOFF</div>
<div class="t " style="left:576.44px;top:321.65px;font-size:8px;line-height:8px;color:#d2d2d2;">-1</div>
<div class="t " style="left:639.84px;top:321.65px;font-size:8px;line-height:8px;color:#d2d2d2;">+1</div>
<div class="t " style="left:609.18px;top:246.65px;font-size:8px;line-height:8px;color:#d2d2d2;">0</div>
<div class="t " style="left:373.85px;top:475.85px;font-size:9.6px;line-height:9.6px;color:#c2c2c2;letter-spacing:0.850px;">CUTOFF B</div>
<div class="t " style="left:359.82px;top:463.85px;font-size:8.6px;line-height:8.6px;color:#d2d2d2;">20</div>
<div class="t " style="left:433.03px;top:463.85px;font-size:8.6px;line-height:8.6px;color:#d2d2d2;">20k</div>
<div class="t " style="left:489.30px;top:465.85px;font-size:9.6px;line-height:9.6px;color:#c2c2c2;letter-spacing:0.080px;">MODE B</div>
<div class="t " style="left:470.39px;top:454.65px;font-size:8px;line-height:8px;color:#d2d2d2;">LP</div>
<div class="t " style="left:536.82px;top:454.65px;font-size:8px;line-height:8px;color:#d2d2d2;">BP2</div>
<div class="t " style="left:503.04px;top:379.65px;font-size:8px;line-height:8px;color:#d2d2d2;">HP</div>
<div class="t " style="left:570.50px;top:465.85px;font-size:9.6px;line-height:9.6px;color:#c2c2c2;letter-spacing:0.193px;">LFO B &gt; CUTOFF</div>
<div class="t " style="left:576.44px;top:454.65px;font-size:8px;line-height:8px;color:#d2d2d2;">-1</div>
<div class="t " style="left:639.84px;top:454.65px;font-size:8px;line-height:8px;color:#d2d2d2;">+1</div>
<div class="t " style="left:609.18px;top:379.65px;font-size:8px;line-height:8px;color:#d2d2d2;">0</div>
<div class="t " style="left:362.55px;top:583.85px;font-size:9.6px;line-height:9.6px;color:#c2c2c2;letter-spacing:0.656px;">RESONANCE B</div>
<div class="t " style="left:364.86px;top:570.95px;font-size:8.4px;line-height:8.4px;color:#d2d2d2;">0</div>
<div class="t " style="left:432.16px;top:570.95px;font-size:8.4px;line-height:8.4px;color:#d2d2d2;">1</div>
<div class="t " style="left:468.10px;top:583.85px;font-size:9.6px;line-height:9.6px;color:#c2c2c2;letter-spacing:0.248px;">LFO A &gt; CUTOFF</div>
<div class="t " style="left:473.94px;top:572.65px;font-size:8px;line-height:8px;color:#d2d2d2;">-1</div>
<div class="t " style="left:537.24px;top:572.65px;font-size:8px;line-height:8px;color:#d2d2d2;">+1</div>
<div class="t " style="left:506.58px;top:498.65px;font-size:8px;line-height:8px;color:#d2d2d2;">0</div>
<div class="t " style="left:575.00px;top:583.85px;font-size:9.6px;line-height:9.6px;color:#c2c2c2;letter-spacing:0.233px;">ENV &gt; CUTOFF</div>
<div class="t " style="left:576.44px;top:572.65px;font-size:8px;line-height:8px;color:#d2d2d2;">-1</div>
<div class="t " style="left:639.84px;top:572.65px;font-size:8px;line-height:8px;color:#d2d2d2;">+1</div>
<div class="t " style="left:609.18px;top:498.65px;font-size:8px;line-height:8px;color:#d2d2d2;">0</div>
<div class="t " style="left:711.36px;top:132.95px;font-size:8.4px;line-height:8.4px;color:#dedede;">1/2</div>
<div class="t " style="left:741.46px;top:132.95px;font-size:8.4px;line-height:8.4px;color:#dedede;">1/4</div>
<div class="t " style="left:684.43px;top:151.95px;font-size:8.4px;line-height:8.4px;color:#dedede;">1bar</div>
<div class="t " style="left:765.56px;top:151.95px;font-size:8.4px;line-height:8.4px;color:#dedede;">1/8</div>
<div class="t " style="left:678.03px;top:181.95px;font-size:8.4px;line-height:8.4px;color:#dedede;">2bar</div>
<div class="t " style="left:769.63px;top:181.95px;font-size:8.4px;line-height:8.4px;color:#dedede;">1/16</div>
<div class="t " style="left:690.83px;top:208.95px;font-size:8.4px;line-height:8.4px;color:#dedede;">4bar</div>
<div class="t " style="left:756.83px;top:208.95px;font-size:8.4px;line-height:8.4px;color:#dedede;">1/32</div>
<div class="t " style="left:687.60px;top:221.85px;font-size:9.6px;line-height:9.6px;color:#c2c2c2;letter-spacing:0.555px;">LFO FREQUENCY</div>
<div class="t " style="left:718.16px;top:239.95px;font-size:8.4px;line-height:8.4px;color:#dedede;">Square</div>
<div class="t " style="left:679.90px;top:268.95px;font-size:8.4px;line-height:8.4px;color:#dedede;">Saw</div>
<div class="t " style="left:771.66px;top:268.95px;font-size:8.4px;line-height:8.4px;color:#dedede;">Tri</div>
<div class="t " style="left:689.73px;top:320.95px;font-size:8.4px;line-height:8.4px;color:#dedede;">Sine</div>
<div class="t " style="left:759.20px;top:320.95px;font-size:8.4px;line-height:8.4px;color:#dedede;">S/H</div>
<div class="t " style="left:702.90px;top:331.85px;font-size:9.6px;line-height:9.6px;color:#c2c2c2;letter-spacing:0.508px;">LFO SHAPE</div>
<div class="t " style="left:711.36px;top:383.95px;font-size:8.4px;line-height:8.4px;color:#dedede;">1/2</div>
<div class="t " style="left:741.46px;top:383.95px;font-size:8.4px;line-height:8.4px;color:#dedede;">1/4</div>
<div class="t " style="left:684.43px;top:403.95px;font-size:8.4px;line-height:8.4px;color:#dedede;">1bar</div>
<div class="t " style="left:765.56px;top:403.95px;font-size:8.4px;line-height:8.4px;color:#dedede;">1/8</div>
<div class="t " style="left:678.03px;top:433.95px;font-size:8.4px;line-height:8.4px;color:#dedede;">2bar</div>
<div class="t " style="left:769.63px;top:432.95px;font-size:8.4px;line-height:8.4px;color:#dedede;">1/16</div>
<div class="t " style="left:690.83px;top:459.95px;font-size:8.4px;line-height:8.4px;color:#dedede;">4bar</div>
<div class="t " style="left:756.83px;top:459.95px;font-size:8.4px;line-height:8.4px;color:#dedede;">1/32</div>
<div class="t " style="left:687.60px;top:473.85px;font-size:9.6px;line-height:9.6px;color:#c2c2c2;letter-spacing:0.555px;">LFO FREQUENCY</div>
<div class="t " style="left:718.16px;top:490.95px;font-size:8.4px;line-height:8.4px;color:#dedede;">Square</div>
<div class="t " style="left:679.90px;top:519.95px;font-size:8.4px;line-height:8.4px;color:#dedede;">Saw</div>
<div class="t " style="left:771.66px;top:519.95px;font-size:8.4px;line-height:8.4px;color:#dedede;">Tri</div>
<div class="t " style="left:689.73px;top:571.95px;font-size:8.4px;line-height:8.4px;color:#dedede;">Sine</div>
<div class="t " style="left:759.20px;top:571.95px;font-size:8.4px;line-height:8.4px;color:#dedede;">S/H</div>
<div class="t " style="left:702.90px;top:583.85px;font-size:9.6px;line-height:9.6px;color:#c2c2c2;letter-spacing:0.508px;">LFO SHAPE</div>
<div class="t " style="left:811.35px;top:549.65px;font-size:9px;line-height:9px;color:#cfcfcf;font-weight:400;">W</div>
<div class="t " style="left:849.35px;top:549.65px;font-size:9px;line-height:9px;color:#cfcfcf;font-weight:400;">R</div>
<div class="t " style="left:886.40px;top:550.65px;font-size:8px;line-height:8px;color:#cfcfcf;font-weight:400;">▶</div>
<div class="t " style="left:1150.00px;top:549.90px;font-size:9.5px;line-height:9.5px;color:#cfcfcf;font-weight:400;letter-spacing:0.080px;">CLEAR</div>
<div class="t " style="left:982.00px;top:550.85px;font-size:7.6px;line-height:7.6px;color:#d4603c;font-weight:400;letter-spacing:0.337px;">AUTOMATION</div>
<div class="t " style="left:815.53px;top:578.65px;font-size:10px;line-height:10px;color:#cfcfcf;font-weight:400;">-</div>
<div class="t " style="left:980.59px;top:577.65px;font-size:11px;line-height:11px;color:#cfcfcf;font-weight:400;">+</div>
<div class="t " style="left:1025.13px;top:578.65px;font-size:10px;line-height:10px;color:#cfcfcf;font-weight:400;">-</div>
<div class="t " style="left:1190.19px;top:577.65px;font-size:11px;line-height:11px;color:#cfcfcf;font-weight:400;">+</div>
<div class="t lcd" style="left:877.00px;top:578.90px;font-size:10.5px;line-height:10.5px;color:#1fb6c0;font-weight:400;letter-spacing:-0.772px;">Cutoff A</div>
<div class="t lcd" style="left:1086.50px;top:578.90px;font-size:10.5px;line-height:10.5px;color:#1fb6c0;font-weight:400;letter-spacing:-0.772px;">Cutoff B</div>
<div class="t " style="left:236.70px;top:621.15px;font-size:12px;line-height:12px;color:#a8a8a8;font-weight:400;letter-spacing:-0.434px;">AUDIO INPUT</div>
<div class="t " style="left:256.50px;top:652.65px;font-size:9px;line-height:9px;color:#fdeee8;font-weight:400;">L</div>
<div class="t " style="left:256.05px;top:711.65px;font-size:9px;line-height:9px;color:#fdeee8;font-weight:400;">R</div>
<div class="t " style="left:236.70px;top:682.85px;font-size:7.6px;line-height:7.6px;color:#d0d0d0;">-inf</div>
<div class="t " style="left:400.00px;top:682.85px;font-size:7.6px;line-height:7.6px;color:#d0d0d0;">-6db</div>
<div class="t " style="left:569.50px;top:682.85px;font-size:7.6px;line-height:7.6px;color:#d0d0d0;">0db</div>
<div class="t " style="left:241.40px;top:737.85px;font-size:13.6px;line-height:13.6px;color:#e2604a;font-weight:400;letter-spacing:0.138px;">iPad Microphone</div>
<div class="t " style="left:614.66px;top:695.95px;font-size:8.4px;line-height:8.4px;color:#d2d2d2;">0</div>
<div class="t " style="left:676.79px;top:695.95px;font-size:8.4px;line-height:8.4px;color:#d2d2d2;">100</div>
<div class="t " style="left:633.00px;top:708.75px;font-size:8.8px;line-height:8.8px;color:#c2c2c2;letter-spacing:0.410px;">LEVEL</div>
<div class="t " style="left:631.55px;top:730.75px;font-size:13.8px;line-height:13.8px;color:#b4b4b4;font-weight:400;letter-spacing:-0.274px;">Mono</div>
<div class="t " style="left:1109.80px;top:621.15px;font-size:12px;line-height:12px;color:#a8a8a8;font-weight:400;letter-spacing:-0.424px;">AUDIO OUTPUT</div>
<div class="t " style="left:1171.90px;top:652.65px;font-size:9px;line-height:9px;color:#fdeee8;font-weight:400;">L</div>
<div class="t " style="left:1171.35px;top:711.65px;font-size:9px;line-height:9px;color:#fdeee8;font-weight:400;">R</div>
<div class="t " style="left:848.20px;top:682.85px;font-size:7.6px;line-height:7.6px;color:#d0d0d0;">0db</div>
<div class="t " style="left:1011.80px;top:682.85px;font-size:7.6px;line-height:7.6px;color:#d0d0d0;">-6db</div>
<div class="t " style="left:1184.38px;top:682.85px;font-size:7.6px;line-height:7.6px;color:#d0d0d0;">-inf</div>
<div class="t " style="left:1145.60px;top:737.85px;font-size:13.6px;line-height:13.6px;color:#e2604a;font-weight:400;letter-spacing:-0.009px;">Speaker</div>
<div class="t " style="left:754.16px;top:695.95px;font-size:8.4px;line-height:8.4px;color:#d2d2d2;">0</div>
<div class="t " style="left:815.69px;top:695.95px;font-size:8.4px;line-height:8.4px;color:#d2d2d2;">100</div>
<div class="t " style="left:772.50px;top:708.75px;font-size:8.8px;line-height:8.8px;color:#c2c2c2;letter-spacing:0.410px;">LEVEL</div>
<div class="t " style="left:772.65px;top:732.75px;font-size:13.8px;line-height:13.8px;color:#b4b4b4;font-weight:400;letter-spacing:-0.060px;">Mute</div>
</div>
</body></html>
